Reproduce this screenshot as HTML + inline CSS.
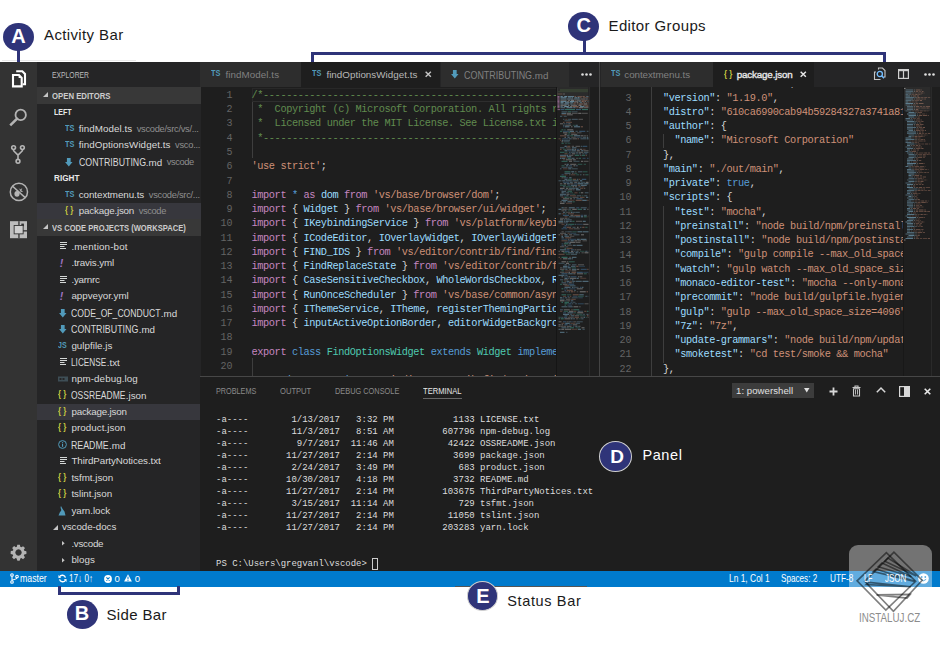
<!DOCTYPE html>
<html><head><meta charset="utf-8"><style>
html,body{font-family:'Liberation Sans',sans-serif;margin:0;padding:0;width:940px;height:645px;overflow:hidden;background:#fff;position:relative}
div{box-sizing:border-box}
.t{position:absolute;white-space:pre;}
svg{position:absolute;overflow:visible}
</style></head><body>
<div style="position:absolute;left:0px;top:62px;width:940px;height:509px;background:#1e1e1e;"></div><div style="position:absolute;left:0px;top:62px;width:37px;height:509px;background:#333333;"></div><div style="position:absolute;left:37px;top:62px;width:163.5px;height:509px;background:#252526;"></div><div style="position:absolute;left:200px;top:62px;width:740px;height:25px;background:#252526;"></div><div style="position:absolute;left:0px;top:571px;width:940px;height:15.5px;background:#007acc;"></div><div style="position:absolute;left:2px;top:60px;width:134px;height:1px;background:#e9e9e9;"></div><div style="position:absolute;left:17px;top:50px;width:3px;height:12px;background:#2f3479;"></div><div style="position:absolute;left:3.0px;top:22.7px;width:31.0px;height:28.6px;border-radius:50%;background:#2f3479;"></div><div style="position:absolute;left:-1.5px;top:21px;width:40px;height:30px;line-height:30px;text-align:center;font-family:'Liberation Sans',sans-serif;font-weight:bold;font-size:20px;color:#fff">A</div><div style="position:absolute;left:582.5px;top:40px;width:3px;height:13px;background:#2f3479;"></div><div style="position:absolute;left:311px;top:51.5px;width:575px;height:3px;background:#2f3479;"></div><div style="position:absolute;left:311px;top:51.5px;width:3px;height:10.5px;background:#2f3479;"></div><div style="position:absolute;left:883px;top:51.5px;width:3px;height:10.5px;background:#2f3479;"></div><div style="position:absolute;left:568.3px;top:11.5px;width:31.0px;height:29.0px;border-radius:50%;background:#2f3479;"></div><div style="position:absolute;left:563.8px;top:10px;width:40px;height:30px;line-height:30px;text-align:center;font-family:'Liberation Sans',sans-serif;font-weight:bold;font-size:20px;color:#fff">C</div><div style="position:absolute;left:58px;top:586px;width:3px;height:9.3px;background:#2f3479;"></div><div style="position:absolute;left:177.3px;top:586px;width:3px;height:9.3px;background:#2f3479;"></div><div style="position:absolute;left:58px;top:592.3px;width:122.3px;height:3px;background:#2f3479;"></div><div style="position:absolute;left:66.5px;top:600.0px;width:31.0px;height:28.6px;border-radius:50%;background:#2f3479;"></div><div style="position:absolute;left:62px;top:598.3px;width:40px;height:30px;line-height:30px;text-align:center;font-family:'Liberation Sans',sans-serif;font-weight:bold;font-size:20px;color:#fff">B</div><div style="position:absolute;left:455px;top:585.8px;width:132px;height:1px;background:#555555;"></div><div style="position:absolute;left:467.2px;top:581.3px;width:31.2px;height:29.4px;border-radius:50%;background:#2f3479;border:1.2px solid #d0d0d0;"></div><div style="position:absolute;left:462.8px;top:581px;width:40px;height:30px;line-height:30px;text-align:center;font-family:'Liberation Sans',sans-serif;font-weight:bold;font-size:20px;color:#fff">E</div><svg style="left:0;top:62px" width="37" height="509" viewBox="0 62 37 509">
<g fill="none" stroke="#ffffff" stroke-width="2.1" stroke-linejoin="miter">
 <path d="M13 75 h6 l2.7 2.8 v8.6 h-8.7 z"/>
 <path d="M16.2 71.2 v0 h6.1 l2.7 2.8 v10.2 h-2.3"/>
</g>
<path d="M18.6 74.2 v3.8 h3.6 z" fill="#ffffff"/>
<g fill="none" stroke="#b4b4b4" stroke-width="1.8">
 <circle cx="20.7" cy="114.9" r="5.2"/>
 <path d="M16.9 118.8 l-5.8 5.8" stroke-width="2.5" stroke-linecap="square"/>
</g>
<g fill="none" stroke="#b4b4b4" stroke-width="1.6">
 <circle cx="13.6" cy="147.6" r="1.9"/>
 <circle cx="22.4" cy="147.6" r="1.9"/>
 <circle cx="18" cy="161.3" r="1.9"/>
 <path d="M13.6 149.5 v1.2 l4.4 4.4 v4.3 M22.4 149.5 v1.2 l-4.4 4.4"/>
</g>
<g fill="none" stroke="#b4b4b4" stroke-width="1.5">
 <circle cx="18.9" cy="191.9" r="8.6"/>
 <path d="M12.6 186.2 l12.6 11.4"/>
</g>
<g fill="#b4b4b4">
 <ellipse cx="17" cy="193.8" rx="2.6" ry="2.9"/>
 <path d="M18.5 187.5 l1.5 2 l2.3-1.3 l-1 2.2 l2 1.2 l-2.5 .5 z"/>
</g>
<rect x="10" y="221.2" width="17" height="17" fill="#bdbdbd"/>
<g fill="#333333">
 <rect x="18.3" y="221.2" width="1.3" height="4.4"/>
 <rect x="18.3" y="233.8" width="1.3" height="4.4"/>
 <rect x="22.9" y="230.2" width="4.1" height="1.3"/>
 <rect x="21.3" y="223.6" width="2.6" height="2.6"/>
 <rect x="13.7" y="225" width="9.9" height="9.3"/>
</g>
<rect x="14.6" y="225.9" width="8.1" height="7.5" fill="#cfcfcf"/>
</svg><svg style="left:10px;top:543.5px" width="17" height="17" viewBox="0 0 16 16">
<path fill="#b4b4b4" d="M8 0.6l1.3 0.2 0.4 1.9 1 .45 1.6-1.1 1.8 1.8-1.1 1.6.45 1 1.9.4.2 1.3-.2 1.3-1.9.4-.45 1 1.1 1.6-1.8 1.8-1.6-1.1-1 .45-.4 1.9-1.3.2-1.3-.2-.4-1.9-1-.45-1.6 1.1-1.8-1.8 1.1-1.6-.45-1-1.9-.4L.6 8l.2-1.3 1.9-.4.45-1-1.1-1.6 1.8-1.8 1.6 1.1 1-.45.4-1.9z M8 5a3 3 0 1 0 0.001 0z" fill-rule="evenodd"/>
</svg><div style="position:absolute;left:37px;top:87px;width:163.5px;height:16.5px;background:#383838;"></div><div style="position:absolute;left:37px;top:219px;width:163.5px;height:16.5px;background:#383838;"></div><svg style="left:43.2px;top:92.3px" width="5" height="5" viewBox="0 0 10 10"><path d="M10 0 V10 H0 z" fill="#c5c5c5"/></svg><svg style="left:43.2px;top:224.3px" width="5" height="5" viewBox="0 0 10 10"><path d="M10 0 V10 H0 z" fill="#c5c5c5"/></svg><svg style="left:65.0px;top:157.5px" width="7.6" height="8.4" viewBox="0 0 8 9"><path d="M2 0 h4 v4.2 h2 l-4 4.8 l-4-4.8 h2z" fill="#519aba"/></svg><div style="position:absolute;left:37px;top:202.7px;width:163.5px;height:16.5px;background:#37373d;"></div><svg style="left:60px;top:242px" width="8" height="9" viewBox="0 0 8 9"><g fill="#d4d7d6"><rect x="0" y="0" width="7" height="1"/><rect x="0" y="2" width="7" height="1"/><rect x="0" y="4" width="4.5" height="1"/><rect x="0" y="6" width="6" height="1"/></g></svg><svg style="left:60px;top:276px" width="8" height="9" viewBox="0 0 8 9"><g fill="#d4d7d6"><rect x="0" y="0" width="7" height="1"/><rect x="0" y="2" width="7" height="1"/><rect x="0" y="4" width="4.5" height="1"/><rect x="0" y="6" width="6" height="1"/></g></svg><svg style="left:58.5px;top:308.5px" width="7.6" height="8.4" viewBox="0 0 8 9"><path d="M2 0 h4 v4.2 h2 l-4 4.8 l-4-4.8 h2z" fill="#519aba"/></svg><svg style="left:58.5px;top:325.0px" width="7.6" height="8.4" viewBox="0 0 8 9"><path d="M2 0 h4 v4.2 h2 l-4 4.8 l-4-4.8 h2z" fill="#519aba"/></svg><svg style="left:60px;top:358px" width="8" height="9" viewBox="0 0 8 9"><g fill="#d4d7d6"><rect x="0" y="0" width="7" height="1"/><rect x="0" y="2" width="7" height="1"/><rect x="0" y="4" width="4.5" height="1"/><rect x="0" y="6" width="6" height="1"/></g></svg><svg style="left:58.2px;top:375.7px" width="10" height="6" viewBox="0 0 10 6"><rect x="0" y="0.5" width="10" height="5" fill="#3e4e56"/><g fill="#252526"><rect x="1.5" y="2" width="2" height="2"/><rect x="4.5" y="2" width="2" height="2"/></g></svg><div style="position:absolute;left:37px;top:403.5px;width:163.5px;height:16.5px;background:#37373d;"></div><svg style="left:58.2px;top:440.2px" width="9" height="9" viewBox="0 0 9 9"><circle cx="4.5" cy="4.5" r="3.9" fill="none" stroke="#519aba" stroke-width="1"/><rect x="4" y="3.8" width="1.1" height="3" fill="#519aba"/><rect x="4" y="2.2" width="1.1" height="1" fill="#519aba"/></svg><svg style="left:60px;top:457px" width="8" height="9" viewBox="0 0 8 9"><g fill="#d4d7d6"><rect x="0" y="0" width="7" height="1"/><rect x="0" y="2" width="7" height="1"/><rect x="0" y="4" width="4.5" height="1"/><rect x="0" y="6" width="6" height="1"/></g></svg><svg style="left:58.2px;top:505.7px" width="8" height="10" viewBox="0 0 8 10"><path d="M3 0 C1.5 3 5 3.5 2 6 L0.5 9.5 H7.5 L6.5 5.5 C5 4 4 2 3 0z" fill="#519aba"/></svg><svg style="left:53.2px;top:524.9px" width="5" height="5" viewBox="0 0 10 10"><path d="M10 0 V10 H0 z" fill="#c5c5c5"/></svg><svg style="left:62px;top:541.45px" width="2.6999999999999997" height="4.5" viewBox="0 0 6 10"><path d="M0 0 L6 5 L0 10 z" fill="#c5c5c5"/></svg><svg style="left:62px;top:557.95px" width="2.6999999999999997" height="4.5" viewBox="0 0 6 10"><path d="M0 0 L6 5 L0 10 z" fill="#c5c5c5"/></svg><div style="position:absolute;left:37px;top:235.5px;width:163.5px;height:3px;background:#252526;"></div><div style="position:absolute;left:200px;top:62px;width:100.5px;height:25px;background:#2d2d2d;"></div><div style="position:absolute;left:301px;top:62px;width:139px;height:25px;background:#1e1e1e;"></div><svg style="left:425px;top:71.3px" width="6.5" height="6.5" viewBox="0 0 10 10"><path d="M1 1 L9 9 M9 1 L1 9" stroke="#c5c5c5" stroke-width="2.2"/></svg><div style="position:absolute;left:440.5px;top:62px;width:128.5px;height:25px;background:#2d2d2d;"></div><svg style="left:450.5px;top:70.3px" width="7.6" height="8.4" viewBox="0 0 8 9"><path d="M2 0 h4 v4.2 h2 l-4 4.8 l-4-4.8 h2z" fill="#519aba"/></svg><div style="position:absolute;left:600.5px;top:62px;width:112.0px;height:25px;background:#2d2d2d;"></div><div style="position:absolute;left:713px;top:62px;width:101px;height:25px;background:#1e1e1e;"></div><svg style="left:799.8px;top:71.3px" width="6.5" height="6.5" viewBox="0 0 10 10"><path d="M1 1 L9 9 M9 1 L1 9" stroke="#e8e8e8" stroke-width="2.2"/></svg><svg style="left:580.8px;top:72.5px" width="11" height="3" viewBox="0 0 11 3"><g fill="#e0e0e0"><circle cx="1.5" cy="1.5" r="1.3"/><circle cx="5.5" cy="1.5" r="1.3"/><circle cx="9.5" cy="1.5" r="1.3"/></g></svg><svg style="left:923.5px;top:72.5px" width="11" height="3" viewBox="0 0 11 3"><g fill="#e0e0e0"><circle cx="1.5" cy="1.5" r="1.3"/><circle cx="5.5" cy="1.5" r="1.3"/><circle cx="9.5" cy="1.5" r="1.3"/></g></svg><svg style="left:873px;top:67px" width="14" height="14" viewBox="0 0 14 14">
<path d="M5.5 2.5 V1 h4 l2.5 2.5 V10 h-1.5" fill="none" stroke="#c5c5c5" stroke-width="1.1"/>
<path d="M3 5 h-1.5 v7.5 h6" fill="none" stroke="#c5c5c5" stroke-width="1.1"/>
<circle cx="6.8" cy="7" r="2.6" fill="none" stroke="#75beff" stroke-width="1.3"/>
<path d="M8.6 8.8 L11 11.2" stroke="#75beff" stroke-width="1.5"/>
</svg><svg style="left:898px;top:69px" width="11" height="10" viewBox="0 0 11 10">
<rect x="0.6" y="0.6" width="9.8" height="8.8" fill="none" stroke="#d0d0d0" stroke-width="1.2"/>
<rect x="0.6" y="0.6" width="9.8" height="1.6" fill="#d0d0d0"/>
<rect x="4.9" y="0.6" width="1.2" height="8.8" fill="#d0d0d0"/>
</svg><div style="position:absolute;left:599px;top:62px;width:1px;height:314px;background:#444444;"></div><div style="position:absolute;left:251.5px;top:87.5px;width:306px;height:14px;background:transparent;border:1px solid #282828;border-bottom-color:#2e2e2e;"></div><div style="position:absolute;left:251.5px;top:101.5px;width:1px;height:56.9px;background:#3e3e3e;"></div><div style="position:absolute;left:251.5px;top:357.5px;width:1px;height:18.5px;background:#3e3e3e;"></div><div style="position:absolute;left:191.5px;top:87px;width:365.5px;height:289px;overflow:hidden"><div style="position:absolute;left:0;width:41.0px;top:0.9000000000000057px;height:16px;line-height:16px;text-align:right;font-family:'Liberation Mono',monospace;font-size:10px;color:#646464">1</div><div style="position:absolute;left:60px;top:-0.19999999999999396px;height:16px;line-height:16px;white-space:pre;font-family:'Liberation Mono',monospace;font-size:10.3px;letter-spacing:-0.4000px"><span style="color:#608b4e">/*-------------------------------------------------------------------------------------</span></div><div style="position:absolute;left:0;width:41.0px;top:15.170000000000002px;height:16px;line-height:16px;text-align:right;font-family:'Liberation Mono',monospace;font-size:10px;color:#646464">2</div><div style="position:absolute;left:60px;top:14.070000000000002px;height:16px;line-height:16px;white-space:pre;font-family:'Liberation Mono',monospace;font-size:10.3px;letter-spacing:-0.4000px"><span style="color:#608b4e"> *  Copyright (c) Microsoft Corporation. All rights reserved.</span></div><div style="position:absolute;left:0;width:41.0px;top:29.439999999999998px;height:16px;line-height:16px;text-align:right;font-family:'Liberation Mono',monospace;font-size:10px;color:#646464">3</div><div style="position:absolute;left:60px;top:28.339999999999996px;height:16px;line-height:16px;white-space:pre;font-family:'Liberation Mono',monospace;font-size:10.3px;letter-spacing:-0.4000px"><span style="color:#608b4e"> *  Licensed under the MIT License. See License.txt in the project root</span></div><div style="position:absolute;left:0;width:41.0px;top:43.71000000000001px;height:16px;line-height:16px;text-align:right;font-family:'Liberation Mono',monospace;font-size:10px;color:#646464">4</div><div style="position:absolute;left:60px;top:42.61000000000001px;height:16px;line-height:16px;white-space:pre;font-family:'Liberation Mono',monospace;font-size:10.3px;letter-spacing:-0.4000px"><span style="color:#608b4e"> *--------------------------------------------------------------------------------------</span></div><div style="position:absolute;left:0;width:41.0px;top:57.98000000000002px;height:16px;line-height:16px;text-align:right;font-family:'Liberation Mono',monospace;font-size:10px;color:#646464">5</div><div style="position:absolute;left:0;width:41.0px;top:72.25px;height:16px;line-height:16px;text-align:right;font-family:'Liberation Mono',monospace;font-size:10px;color:#646464">6</div><div style="position:absolute;left:60px;top:71.15px;height:16px;line-height:16px;white-space:pre;font-family:'Liberation Mono',monospace;font-size:10.3px;letter-spacing:-0.4000px"><span style="color:#ce9178">'use strict'</span><span style="color:#d4d4d4">;</span></div><div style="position:absolute;left:0;width:41.0px;top:86.52000000000001px;height:16px;line-height:16px;text-align:right;font-family:'Liberation Mono',monospace;font-size:10px;color:#646464">7</div><div style="position:absolute;left:0;width:41.0px;top:100.79000000000002px;height:16px;line-height:16px;text-align:right;font-family:'Liberation Mono',monospace;font-size:10px;color:#646464">8</div><div style="position:absolute;left:60px;top:99.69000000000003px;height:16px;line-height:16px;white-space:pre;font-family:'Liberation Mono',monospace;font-size:10.3px;letter-spacing:-0.4000px"><span style="color:#c586c0">import</span><span style="color:#d4d4d4"> </span><span style="color:#569cd6">*</span><span style="color:#d4d4d4"> </span><span style="color:#c586c0">as</span><span style="color:#d4d4d4"> </span><span style="color:#9cdcfe">dom</span><span style="color:#d4d4d4"> </span><span style="color:#c586c0">from</span><span style="color:#d4d4d4"> </span><span style="color:#ce9178">'vs/base/browser/dom'</span><span style="color:#d4d4d4">;</span></div><div style="position:absolute;left:0;width:41.0px;top:115.06px;height:16px;line-height:16px;text-align:right;font-family:'Liberation Mono',monospace;font-size:10px;color:#646464">9</div><div style="position:absolute;left:60px;top:113.96000000000001px;height:16px;line-height:16px;white-space:pre;font-family:'Liberation Mono',monospace;font-size:10.3px;letter-spacing:-0.4000px"><span style="color:#c586c0">import</span><span style="color:#d4d4d4"> { </span><span style="color:#9cdcfe">Widget</span><span style="color:#d4d4d4"> } </span><span style="color:#c586c0">from</span><span style="color:#d4d4d4"> </span><span style="color:#ce9178">'vs/base/browser/ui/widget'</span><span style="color:#d4d4d4">;</span></div><div style="position:absolute;left:0;width:41.0px;top:129.33px;height:16px;line-height:16px;text-align:right;font-family:'Liberation Mono',monospace;font-size:10px;color:#646464">10</div><div style="position:absolute;left:60px;top:128.23000000000002px;height:16px;line-height:16px;white-space:pre;font-family:'Liberation Mono',monospace;font-size:10.3px;letter-spacing:-0.4000px"><span style="color:#c586c0">import</span><span style="color:#d4d4d4"> { </span><span style="color:#9cdcfe">IKeybindingService</span><span style="color:#d4d4d4"> } </span><span style="color:#c586c0">from</span><span style="color:#d4d4d4"> </span><span style="color:#ce9178">'vs/platform/keybinding/common/keybinding'</span></div><div style="position:absolute;left:0;width:41.0px;top:143.6px;height:16px;line-height:16px;text-align:right;font-family:'Liberation Mono',monospace;font-size:10px;color:#646464">11</div><div style="position:absolute;left:60px;top:142.5px;height:16px;line-height:16px;white-space:pre;font-family:'Liberation Mono',monospace;font-size:10.3px;letter-spacing:-0.4000px"><span style="color:#c586c0">import</span><span style="color:#d4d4d4"> { </span><span style="color:#9cdcfe">ICodeEditor</span><span style="color:#d4d4d4">, </span><span style="color:#9cdcfe">IOverlayWidget</span><span style="color:#d4d4d4">, </span><span style="color:#9cdcfe">IOverlayWidgetPosition</span></div><div style="position:absolute;left:0;width:41.0px;top:157.87px;height:16px;line-height:16px;text-align:right;font-family:'Liberation Mono',monospace;font-size:10px;color:#646464">12</div><div style="position:absolute;left:60px;top:156.77px;height:16px;line-height:16px;white-space:pre;font-family:'Liberation Mono',monospace;font-size:10.3px;letter-spacing:-0.4000px"><span style="color:#c586c0">import</span><span style="color:#d4d4d4"> { </span><span style="color:#9cdcfe">FIND_IDS</span><span style="color:#d4d4d4"> } </span><span style="color:#c586c0">from</span><span style="color:#d4d4d4"> </span><span style="color:#ce9178">'vs/editor/contrib/find/findModel'</span></div><div style="position:absolute;left:0;width:41.0px;top:172.14px;height:16px;line-height:16px;text-align:right;font-family:'Liberation Mono',monospace;font-size:10px;color:#646464">13</div><div style="position:absolute;left:60px;top:171.04px;height:16px;line-height:16px;white-space:pre;font-family:'Liberation Mono',monospace;font-size:10.3px;letter-spacing:-0.4000px"><span style="color:#c586c0">import</span><span style="color:#d4d4d4"> { </span><span style="color:#9cdcfe">FindReplaceState</span><span style="color:#d4d4d4"> } </span><span style="color:#c586c0">from</span><span style="color:#d4d4d4"> </span><span style="color:#ce9178">'vs/editor/contrib/find/findState'</span></div><div style="position:absolute;left:0;width:41.0px;top:186.40999999999997px;height:16px;line-height:16px;text-align:right;font-family:'Liberation Mono',monospace;font-size:10px;color:#646464">14</div><div style="position:absolute;left:60px;top:185.30999999999997px;height:16px;line-height:16px;white-space:pre;font-family:'Liberation Mono',monospace;font-size:10.3px;letter-spacing:-0.4000px"><span style="color:#c586c0">import</span><span style="color:#d4d4d4"> { </span><span style="color:#9cdcfe">CaseSensitiveCheckbox</span><span style="color:#d4d4d4">, </span><span style="color:#9cdcfe">WholeWordsCheckbox</span><span style="color:#d4d4d4">, </span><span style="color:#9cdcfe">RegexCheckbox</span></div><div style="position:absolute;left:0;width:41.0px;top:200.68px;height:16px;line-height:16px;text-align:right;font-family:'Liberation Mono',monospace;font-size:10px;color:#646464">15</div><div style="position:absolute;left:60px;top:199.58px;height:16px;line-height:16px;white-space:pre;font-family:'Liberation Mono',monospace;font-size:10.3px;letter-spacing:-0.4000px"><span style="color:#c586c0">import</span><span style="color:#d4d4d4"> { </span><span style="color:#9cdcfe">RunOnceScheduler</span><span style="color:#d4d4d4"> } </span><span style="color:#c586c0">from</span><span style="color:#d4d4d4"> </span><span style="color:#ce9178">'vs/base/common/async'</span></div><div style="position:absolute;left:0;width:41.0px;top:214.95px;height:16px;line-height:16px;text-align:right;font-family:'Liberation Mono',monospace;font-size:10px;color:#646464">16</div><div style="position:absolute;left:60px;top:213.85px;height:16px;line-height:16px;white-space:pre;font-family:'Liberation Mono',monospace;font-size:10.3px;letter-spacing:-0.4000px"><span style="color:#c586c0">import</span><span style="color:#d4d4d4"> { </span><span style="color:#9cdcfe">IThemeService</span><span style="color:#d4d4d4">, </span><span style="color:#9cdcfe">ITheme</span><span style="color:#d4d4d4">, </span><span style="color:#9cdcfe">registerThemingParticipant</span></div><div style="position:absolute;left:0;width:41.0px;top:229.22000000000003px;height:16px;line-height:16px;text-align:right;font-family:'Liberation Mono',monospace;font-size:10px;color:#646464">17</div><div style="position:absolute;left:60px;top:228.12000000000003px;height:16px;line-height:16px;white-space:pre;font-family:'Liberation Mono',monospace;font-size:10.3px;letter-spacing:-0.4000px"><span style="color:#c586c0">import</span><span style="color:#d4d4d4"> { </span><span style="color:#9cdcfe">inputActiveOptionBorder</span><span style="color:#d4d4d4">, </span><span style="color:#9cdcfe">editorWidgetBackground</span><span style="color:#d4d4d4">, </span><span style="color:#9cdcfe">contrastBorder</span></div><div style="position:absolute;left:0;width:41.0px;top:243.49px;height:16px;line-height:16px;text-align:right;font-family:'Liberation Mono',monospace;font-size:10px;color:#646464">18</div><div style="position:absolute;left:0;width:41.0px;top:257.76px;height:16px;line-height:16px;text-align:right;font-family:'Liberation Mono',monospace;font-size:10px;color:#646464">19</div><div style="position:absolute;left:60px;top:256.65999999999997px;height:16px;line-height:16px;white-space:pre;font-family:'Liberation Mono',monospace;font-size:10.3px;letter-spacing:-0.4000px"><span style="color:#c586c0">export</span><span style="color:#d4d4d4"> </span><span style="color:#569cd6">class</span><span style="color:#d4d4d4"> </span><span style="color:#4ec9b0">FindOptionsWidget</span><span style="color:#d4d4d4"> </span><span style="color:#569cd6">extends</span><span style="color:#d4d4d4"> </span><span style="color:#4ec9b0">Widget</span><span style="color:#d4d4d4"> </span><span style="color:#569cd6">implements</span><span style="color:#d4d4d4"> </span><span style="color:#4ec9b0">IOverlayWidget</span></div><div style="position:absolute;left:0;width:41.0px;top:272.03px;height:16px;line-height:16px;text-align:right;font-family:'Liberation Mono',monospace;font-size:10px;color:#646464">20</div><div style="position:absolute;left:0;width:41.0px;top:286.29999999999995px;height:16px;line-height:16px;text-align:right;font-family:'Liberation Mono',monospace;font-size:10px;color:#646464">21</div><div style="position:absolute;left:60px;top:285.19999999999993px;height:16px;line-height:16px;white-space:pre;font-family:'Liberation Mono',monospace;font-size:10.3px;letter-spacing:-0.4000px"><span style="color:#d4d4d4">    </span><span style="color:#569cd6">private</span><span style="color:#d4d4d4"> </span><span style="color:#569cd6">static</span><span style="color:#d4d4d4"> </span><span style="color:#9cdcfe">ID</span><span style="color:#d4d4d4"> = </span><span style="color:#ce9178">'editor.contrib.findOptionsWidget'</span><span style="color:#d4d4d4">;</span></div></div><div style="position:absolute;left:651px;top:87px;width:1px;height:289px;background:#3e3e3e;"></div><div style="position:absolute;left:662.6px;top:134.2px;width:1px;height:14.2px;background:#3e3e3e;"></div><div style="position:absolute;left:662.6px;top:205.5px;width:1px;height:157px;background:#3e3e3e;"></div><div style="position:absolute;left:591.4px;top:87px;width:312.4px;height:289px;overflow:hidden"><div style="position:absolute;left:0;width:40.10000000000002px;top:-10.670000000000002px;height:16px;line-height:16px;text-align:right;font-family:'Liberation Mono',monospace;font-size:10px;color:#646464">2</div><div style="position:absolute;left:60px;top:-11.770000000000001px;height:16px;line-height:16px;white-space:pre;font-family:'Liberation Mono',monospace;font-size:10.3px;letter-spacing:-0.4000px"><span style="color:#d4d4d4">  </span><span style="color:#9cdcfe">"name"</span><span style="color:#d4d4d4">: </span><span style="color:#ce9178">"code-oss-dev"</span><span style="color:#d4d4d4">,</span></div><div style="position:absolute;left:0;width:40.10000000000002px;top:3.5999999999999943px;height:16px;line-height:16px;text-align:right;font-family:'Liberation Mono',monospace;font-size:10px;color:#646464">3</div><div style="position:absolute;left:60px;top:2.4999999999999947px;height:16px;line-height:16px;white-space:pre;font-family:'Liberation Mono',monospace;font-size:10.3px;letter-spacing:-0.4000px"><span style="color:#d4d4d4">  </span><span style="color:#9cdcfe">"version"</span><span style="color:#d4d4d4">: </span><span style="color:#ce9178">"1.19.0"</span><span style="color:#d4d4d4">,</span></div><div style="position:absolute;left:0;width:40.10000000000002px;top:17.870000000000005px;height:16px;line-height:16px;text-align:right;font-family:'Liberation Mono',monospace;font-size:10px;color:#646464">4</div><div style="position:absolute;left:60px;top:16.770000000000003px;height:16px;line-height:16px;white-space:pre;font-family:'Liberation Mono',monospace;font-size:10.3px;letter-spacing:-0.4000px"><span style="color:#d4d4d4">  </span><span style="color:#9cdcfe">"distro"</span><span style="color:#d4d4d4">: </span><span style="color:#ce9178">"610ca6990cab94b59284327a3741a81e4c4f2c3e"</span><span style="color:#d4d4d4">,</span></div><div style="position:absolute;left:0;width:40.10000000000002px;top:32.14px;height:16px;line-height:16px;text-align:right;font-family:'Liberation Mono',monospace;font-size:10px;color:#646464">5</div><div style="position:absolute;left:60px;top:31.04px;height:16px;line-height:16px;white-space:pre;font-family:'Liberation Mono',monospace;font-size:10.3px;letter-spacing:-0.4000px"><span style="color:#d4d4d4">  </span><span style="color:#9cdcfe">"author"</span><span style="color:#d4d4d4">: {</span></div><div style="position:absolute;left:0;width:40.10000000000002px;top:46.41px;height:16px;line-height:16px;text-align:right;font-family:'Liberation Mono',monospace;font-size:10px;color:#646464">6</div><div style="position:absolute;left:60px;top:45.309999999999995px;height:16px;line-height:16px;white-space:pre;font-family:'Liberation Mono',monospace;font-size:10.3px;letter-spacing:-0.4000px"><span style="color:#d4d4d4">    </span><span style="color:#9cdcfe">"name"</span><span style="color:#d4d4d4">: </span><span style="color:#ce9178">"Microsoft Corporation"</span></div><div style="position:absolute;left:0;width:40.10000000000002px;top:60.68000000000001px;height:16px;line-height:16px;text-align:right;font-family:'Liberation Mono',monospace;font-size:10px;color:#646464">7</div><div style="position:absolute;left:60px;top:59.580000000000005px;height:16px;line-height:16px;white-space:pre;font-family:'Liberation Mono',monospace;font-size:10.3px;letter-spacing:-0.4000px"><span style="color:#d4d4d4">  },</span></div><div style="position:absolute;left:0;width:40.10000000000002px;top:74.94999999999999px;height:16px;line-height:16px;text-align:right;font-family:'Liberation Mono',monospace;font-size:10px;color:#646464">8</div><div style="position:absolute;left:60px;top:73.85px;height:16px;line-height:16px;white-space:pre;font-family:'Liberation Mono',monospace;font-size:10.3px;letter-spacing:-0.4000px"><span style="color:#d4d4d4">  </span><span style="color:#9cdcfe">"main"</span><span style="color:#d4d4d4">: </span><span style="color:#ce9178">"./out/main"</span><span style="color:#d4d4d4">,</span></div><div style="position:absolute;left:0;width:40.10000000000002px;top:89.22px;height:16px;line-height:16px;text-align:right;font-family:'Liberation Mono',monospace;font-size:10px;color:#646464">9</div><div style="position:absolute;left:60px;top:88.12px;height:16px;line-height:16px;white-space:pre;font-family:'Liberation Mono',monospace;font-size:10.3px;letter-spacing:-0.4000px"><span style="color:#d4d4d4">  </span><span style="color:#9cdcfe">"private"</span><span style="color:#d4d4d4">: </span><span style="color:#569cd6">true</span><span style="color:#d4d4d4">,</span></div><div style="position:absolute;left:0;width:40.10000000000002px;top:103.49000000000001px;height:16px;line-height:16px;text-align:right;font-family:'Liberation Mono',monospace;font-size:10px;color:#646464">10</div><div style="position:absolute;left:60px;top:102.39000000000001px;height:16px;line-height:16px;white-space:pre;font-family:'Liberation Mono',monospace;font-size:10.3px;letter-spacing:-0.4000px"><span style="color:#d4d4d4">  </span><span style="color:#9cdcfe">"scripts"</span><span style="color:#d4d4d4">: {</span></div><div style="position:absolute;left:0;width:40.10000000000002px;top:117.75999999999999px;height:16px;line-height:16px;text-align:right;font-family:'Liberation Mono',monospace;font-size:10px;color:#646464">11</div><div style="position:absolute;left:60px;top:116.66px;height:16px;line-height:16px;white-space:pre;font-family:'Liberation Mono',monospace;font-size:10.3px;letter-spacing:-0.4000px"><span style="color:#d4d4d4">    </span><span style="color:#9cdcfe">"test"</span><span style="color:#d4d4d4">: </span><span style="color:#ce9178">"mocha"</span><span style="color:#d4d4d4">,</span></div><div style="position:absolute;left:0;width:40.10000000000002px;top:132.02999999999997px;height:16px;line-height:16px;text-align:right;font-family:'Liberation Mono',monospace;font-size:10px;color:#646464">12</div><div style="position:absolute;left:60px;top:130.92999999999998px;height:16px;line-height:16px;white-space:pre;font-family:'Liberation Mono',monospace;font-size:10.3px;letter-spacing:-0.4000px"><span style="color:#d4d4d4">    </span><span style="color:#9cdcfe">"preinstall"</span><span style="color:#d4d4d4">: </span><span style="color:#ce9178">"node build/npm/preinstall.js"</span><span style="color:#d4d4d4">,</span></div><div style="position:absolute;left:0;width:40.10000000000002px;top:146.3px;height:16px;line-height:16px;text-align:right;font-family:'Liberation Mono',monospace;font-size:10px;color:#646464">13</div><div style="position:absolute;left:60px;top:145.20000000000002px;height:16px;line-height:16px;white-space:pre;font-family:'Liberation Mono',monospace;font-size:10.3px;letter-spacing:-0.4000px"><span style="color:#d4d4d4">    </span><span style="color:#9cdcfe">"postinstall"</span><span style="color:#d4d4d4">: </span><span style="color:#ce9178">"node build/npm/postinstall.js"</span><span style="color:#d4d4d4">,</span></div><div style="position:absolute;left:0;width:40.10000000000002px;top:160.57px;height:16px;line-height:16px;text-align:right;font-family:'Liberation Mono',monospace;font-size:10px;color:#646464">14</div><div style="position:absolute;left:60px;top:159.47px;height:16px;line-height:16px;white-space:pre;font-family:'Liberation Mono',monospace;font-size:10.3px;letter-spacing:-0.4000px"><span style="color:#d4d4d4">    </span><span style="color:#9cdcfe">"compile"</span><span style="color:#d4d4d4">: </span><span style="color:#ce9178">"gulp compile --max_old_space_size=4096"</span><span style="color:#d4d4d4">,</span></div><div style="position:absolute;left:0;width:40.10000000000002px;top:174.83999999999997px;height:16px;line-height:16px;text-align:right;font-family:'Liberation Mono',monospace;font-size:10px;color:#646464">15</div><div style="position:absolute;left:60px;top:173.73999999999998px;height:16px;line-height:16px;white-space:pre;font-family:'Liberation Mono',monospace;font-size:10.3px;letter-spacing:-0.4000px"><span style="color:#d4d4d4">    </span><span style="color:#9cdcfe">"watch"</span><span style="color:#d4d4d4">: </span><span style="color:#ce9178">"gulp watch --max_old_space_size=4096"</span><span style="color:#d4d4d4">,</span></div><div style="position:absolute;left:0;width:40.10000000000002px;top:189.11px;height:16px;line-height:16px;text-align:right;font-family:'Liberation Mono',monospace;font-size:10px;color:#646464">16</div><div style="position:absolute;left:60px;top:188.01000000000002px;height:16px;line-height:16px;white-space:pre;font-family:'Liberation Mono',monospace;font-size:10.3px;letter-spacing:-0.4000px"><span style="color:#d4d4d4">    </span><span style="color:#9cdcfe">"monaco-editor-test"</span><span style="color:#d4d4d4">: </span><span style="color:#ce9178">"mocha --only-monaco-editor"</span><span style="color:#d4d4d4">,</span></div><div style="position:absolute;left:0;width:40.10000000000002px;top:203.38px;height:16px;line-height:16px;text-align:right;font-family:'Liberation Mono',monospace;font-size:10px;color:#646464">17</div><div style="position:absolute;left:60px;top:202.28px;height:16px;line-height:16px;white-space:pre;font-family:'Liberation Mono',monospace;font-size:10.3px;letter-spacing:-0.4000px"><span style="color:#d4d4d4">    </span><span style="color:#9cdcfe">"precommit"</span><span style="color:#d4d4d4">: </span><span style="color:#ce9178">"node build/gulpfile.hygiene.js"</span><span style="color:#d4d4d4">,</span></div><div style="position:absolute;left:0;width:40.10000000000002px;top:217.64999999999998px;height:16px;line-height:16px;text-align:right;font-family:'Liberation Mono',monospace;font-size:10px;color:#646464">18</div><div style="position:absolute;left:60px;top:216.54999999999998px;height:16px;line-height:16px;white-space:pre;font-family:'Liberation Mono',monospace;font-size:10.3px;letter-spacing:-0.4000px"><span style="color:#d4d4d4">    </span><span style="color:#9cdcfe">"gulp"</span><span style="color:#d4d4d4">: </span><span style="color:#ce9178">"gulp --max_old_space_size=4096"</span><span style="color:#d4d4d4">,</span></div><div style="position:absolute;left:0;width:40.10000000000002px;top:231.92000000000002px;height:16px;line-height:16px;text-align:right;font-family:'Liberation Mono',monospace;font-size:10px;color:#646464">19</div><div style="position:absolute;left:60px;top:230.82000000000002px;height:16px;line-height:16px;white-space:pre;font-family:'Liberation Mono',monospace;font-size:10.3px;letter-spacing:-0.4000px"><span style="color:#d4d4d4">    </span><span style="color:#9cdcfe">"7z"</span><span style="color:#d4d4d4">: </span><span style="color:#ce9178">"7z"</span><span style="color:#d4d4d4">,</span></div><div style="position:absolute;left:0;width:40.10000000000002px;top:246.19px;height:16px;line-height:16px;text-align:right;font-family:'Liberation Mono',monospace;font-size:10px;color:#646464">20</div><div style="position:absolute;left:60px;top:245.09px;height:16px;line-height:16px;white-space:pre;font-family:'Liberation Mono',monospace;font-size:10.3px;letter-spacing:-0.4000px"><span style="color:#d4d4d4">    </span><span style="color:#9cdcfe">"update-grammars"</span><span style="color:#d4d4d4">: </span><span style="color:#ce9178">"node build/npm/update-all-grammars.js"</span><span style="color:#d4d4d4">,</span></div><div style="position:absolute;left:0;width:40.10000000000002px;top:260.46px;height:16px;line-height:16px;text-align:right;font-family:'Liberation Mono',monospace;font-size:10px;color:#646464">21</div><div style="position:absolute;left:60px;top:259.35999999999996px;height:16px;line-height:16px;white-space:pre;font-family:'Liberation Mono',monospace;font-size:10.3px;letter-spacing:-0.4000px"><span style="color:#d4d4d4">    </span><span style="color:#9cdcfe">"smoketest"</span><span style="color:#d4d4d4">: </span><span style="color:#ce9178">"cd test/smoke &amp;&amp; mocha"</span></div><div style="position:absolute;left:0;width:40.10000000000002px;top:274.72999999999996px;height:16px;line-height:16px;text-align:right;font-family:'Liberation Mono',monospace;font-size:10px;color:#646464">22</div><div style="position:absolute;left:60px;top:273.62999999999994px;height:16px;line-height:16px;white-space:pre;font-family:'Liberation Mono',monospace;font-size:10.3px;letter-spacing:-0.4000px"><span style="color:#d4d4d4">  },</span></div></div><div style="position:absolute;left:200px;top:376px;width:740px;height:195px;background:#1e1e1e;"></div><div style="position:absolute;left:200px;top:376px;width:740px;height:1px;background:#474747;"></div><div style="position:absolute;left:423px;top:398px;width:38.5px;height:1px;background:#666666;"></div><div style="position:absolute;left:731.7px;top:383px;width:82.3px;height:15.2px;background:#3c3c3c;"></div><svg style="left:804px;top:387.5px" width="5.5" height="4.5" viewBox="0 0 10 8"><path d="M0 0 H10 L5 8z" fill="#e0e0e0"/></svg><svg style="left:828.5px;top:386.5px" width="9" height="9" viewBox="0 0 9 9"><path d="M4.5 0.5 V8.5 M0.5 4.5 H8.5" stroke="#d8d8d8" stroke-width="1.8"/></svg><svg style="left:851.5px;top:385px" width="9" height="12" viewBox="0 0 9 12"><g fill="none" stroke="#c8c8c8" stroke-width="1.1">
<path d="M1.5 3.5 V11 H7.5 V3.5"/><path d="M0.5 2.5 H8.5"/><path d="M3 2.5 V1 H6 V2.5"/></g>
<g fill="#c8c8c8"><rect x="3" y="4.5" width="0.9" height="5"/><rect x="5.1" y="4.5" width="0.9" height="5"/><rect x="1.5" y="3.2" width="6" height="1"/></g></svg><svg style="left:875.5px;top:387px" width="10" height="6" viewBox="0 0 10 6"><path d="M0.8 5.2 L5 1 L9.2 5.2" fill="none" stroke="#d8d8d8" stroke-width="1.5"/></svg><svg style="left:898.5px;top:385.5px" width="11" height="11" viewBox="0 0 11 11"><rect x="0.6" y="0.6" width="9.8" height="9.8" fill="none" stroke="#d8d8d8" stroke-width="1.2"/><rect x="5" y="0.6" width="5.4" height="9.8" fill="#d8d8d8"/></svg><svg style="left:923.7px;top:387.6px" width="7" height="7" viewBox="0 0 10 10"><path d="M1 1 L9 9 M9 1 L1 9" stroke="#e8e8e8" stroke-width="2.3"/></svg><div style="position:absolute;left:216px;top:413.4px;height:14px;line-height:14px;white-space:pre;font-family:'Liberation Mono',monospace;font-size:9px;color:#dddddd;letter-spacing:-0.0120px">-a----        1/13/2017   3:32 PM           1133 LICENSE.txt</div><div style="position:absolute;left:216px;top:425.4px;height:14px;line-height:14px;white-space:pre;font-family:'Liberation Mono',monospace;font-size:9px;color:#dddddd;letter-spacing:-0.0120px">-a----        11/3/2017   8:51 AM         607796 npm-debug.log</div><div style="position:absolute;left:216px;top:437.4px;height:14px;line-height:14px;white-space:pre;font-family:'Liberation Mono',monospace;font-size:9px;color:#dddddd;letter-spacing:-0.0120px">-a----         9/7/2017  11:46 AM          42422 OSSREADME.json</div><div style="position:absolute;left:216px;top:449.4px;height:14px;line-height:14px;white-space:pre;font-family:'Liberation Mono',monospace;font-size:9px;color:#dddddd;letter-spacing:-0.0120px">-a----       11/27/2017   2:14 PM           3699 package.json</div><div style="position:absolute;left:216px;top:461.4px;height:14px;line-height:14px;white-space:pre;font-family:'Liberation Mono',monospace;font-size:9px;color:#dddddd;letter-spacing:-0.0120px">-a----        2/24/2017   3:49 PM            683 product.json</div><div style="position:absolute;left:216px;top:473.4px;height:14px;line-height:14px;white-space:pre;font-family:'Liberation Mono',monospace;font-size:9px;color:#dddddd;letter-spacing:-0.0120px">-a----       10/30/2017   4:18 PM           3732 README.md</div><div style="position:absolute;left:216px;top:485.4px;height:14px;line-height:14px;white-space:pre;font-family:'Liberation Mono',monospace;font-size:9px;color:#dddddd;letter-spacing:-0.0120px">-a----       11/27/2017   2:14 PM         103675 ThirdPartyNotices.txt</div><div style="position:absolute;left:216px;top:497.4px;height:14px;line-height:14px;white-space:pre;font-family:'Liberation Mono',monospace;font-size:9px;color:#dddddd;letter-spacing:-0.0120px">-a----        3/15/2017  11:14 AM            729 tsfmt.json</div><div style="position:absolute;left:216px;top:509.4px;height:14px;line-height:14px;white-space:pre;font-family:'Liberation Mono',monospace;font-size:9px;color:#dddddd;letter-spacing:-0.0120px">-a----       11/27/2017   2:14 PM          11050 tslint.json</div><div style="position:absolute;left:216px;top:521.4px;height:14px;line-height:14px;white-space:pre;font-family:'Liberation Mono',monospace;font-size:9px;color:#dddddd;letter-spacing:-0.0120px">-a----       11/27/2017   2:14 PM         203283 yarn.lock</div><div style="position:absolute;left:216px;top:557.4px;height:14px;line-height:14px;white-space:pre;font-family:'Liberation Mono',monospace;font-size:9px;color:#dddddd;letter-spacing:-0.0120px">PS C:\Users\gregvanl\vscode&gt; </div><div style="position:absolute;left:372px;top:558.2px;width:6.4px;height:11.5px;background:transparent;border:1px solid #cccccc;"></div><svg style="left:9.5px;top:573px" width="9" height="11" viewBox="0 0 9 11"><g fill="none" stroke="#fff" stroke-width="1.1">
<circle cx="2" cy="2" r="1.3"/><circle cx="7" cy="3.5" r="1.3"/><circle cx="2" cy="9" r="1.3"/><path d="M2 3.3 V7.7 M7 4.8 C7 7 2 6 2 7.7"/></g></svg><svg style="left:57.5px;top:574px" width="9" height="9" viewBox="0 0 10 10"><g fill="none" stroke="#fff" stroke-width="1.5">
<path d="M8.3 4 A3.6 3.6 0 0 0 1.8 3"/><path d="M1.7 6 A3.6 3.6 0 0 0 8.2 7"/></g>
<path d="M0.5 1 L3.5 4.2 L0.5 4.5z M9.5 9 L6.5 5.8 L9.5 5.5z" fill="#fff"/></svg><svg style="left:103.8px;top:574.5px" width="8" height="8" viewBox="0 0 8 8"><circle cx="4" cy="4" r="3.9" fill="#fff"/><path d="M2.4 2.4 L5.6 5.6 M5.6 2.4 L2.4 5.6" stroke="#007acc" stroke-width="1.1"/></svg><svg style="left:123.8px;top:574px" width="8" height="8" viewBox="0 0 8 8"><path d="M4 0.2 L7.9 7.6 H0.1z" fill="#fff"/><rect x="3.5" y="2.6" width="1" height="2.8" fill="#007acc"/><rect x="3.5" y="6" width="1" height="0.9" fill="#007acc"/></svg><svg style="left:917.8px;top:573px" width="11" height="11" viewBox="0 0 11 11"><circle cx="5.5" cy="5.5" r="5.3" fill="#fff"/><circle cx="3.7" cy="4" r="0.9" fill="#007acc"/><circle cx="7.3" cy="4" r="0.9" fill="#007acc"/><path d="M2.8 6.3 Q5.5 9.3 8.2 6.3" fill="none" stroke="#007acc" stroke-width="1"/></svg><div style="position:absolute;left:598.6px;top:440.79999999999995px;width:33.2px;height:31.2px;border-radius:50%;background:#2f3479;border:1.2px solid #d0d0d0;"></div><div style="position:absolute;left:597.0px;top:441.79999999999995px;width:40px;height:30px;line-height:30px;text-align:center;font-family:'Liberation Sans',sans-serif;font-weight:bold;font-size:19px;color:#fff">D</div><div style="position:absolute;left:849px;top:544.7px;width:83px;height:80px;border-radius:9px;background:rgba(255,255,255,0.38)"></div><svg style="left:850px;top:545px" width="80" height="70" viewBox="0 0 737 645"><g fill="none" stroke="rgba(0,0,0,0.5)" stroke-width="15" stroke-linejoin="miter">
<path d="M65 330 L335 70 L605 335 L330 600 Z"/>
<path d="M135 335 L405 65 L665 325 L400 610 Z"/>
<path d="M260 200 L295 165 L565 292 Z"/>
<path d="M320 150 L350 120 L610 285 Z"/>
<path d="M215 245 L240 222 L595 335 Z"/>
<path d="M150 365 L175 345 L560 385 Z"/>
<path d="M245 460 L555 455 L525 490 Z"/>
</g></svg><svg style="left:557px;top:87px" width="31.5" height="289" viewBox="0 0 31.5 289"><rect x="0" y="0" width="31.5" height="21.5" fill="#ffffff" opacity="0.06"/><rect x="3.00" y="2.5" width="28.00" height="1" fill="#608b4e" opacity="0.4"/><rect x="1.00" y="4.2" width="30.00" height="1" fill="#608b4e" opacity="0.25"/><rect x="0.50" y="6.5" width="5.00" height="1" fill="#ce9178" opacity="0.35"/><rect x="6.00" y="6.5" width="2.00" height="1" fill="#d4d4d4" opacity="0.3"/><rect x="0.50" y="9.0" width="2.00" height="1" fill="#c586c0" opacity="0.6"/><rect x="3.50" y="9.0" width="2.25" height="1" fill="#9cdcfe" opacity="0.47"/><rect x="7.25" y="9.0" width="3.00" height="1" fill="#9cdcfe" opacity="0.51"/><rect x="11.00" y="9.0" width="6.00" height="1" fill="#9cdcfe" opacity="0.43"/><rect x="17.50" y="9.0" width="1.50" height="1" fill="#ce9178" opacity="0.39"/><rect x="20.50" y="9.0" width="4.50" height="1" fill="#ce9178" opacity="0.34"/><rect x="25.50" y="9.0" width="2.25" height="1" fill="#ce9178" opacity="0.41"/><rect x="29.25" y="9.0" width="2.25" height="1" fill="#9cdcfe" opacity="0.31"/><rect x="0.50" y="10.2" width="2.00" height="1" fill="#c586c0" opacity="0.6"/><rect x="3.50" y="10.2" width="6.00" height="1" fill="#9cdcfe" opacity="0.47"/><rect x="11.00" y="10.2" width="3.00" height="1" fill="#9cdcfe" opacity="0.34"/><rect x="14.50" y="10.2" width="1.50" height="1" fill="#9cdcfe" opacity="0.41"/><rect x="17.50" y="10.2" width="3.00" height="1" fill="#9cdcfe" opacity="0.42"/><rect x="21.00" y="10.2" width="1.50" height="1" fill="#9cdcfe" opacity="0.52"/><rect x="23.00" y="10.2" width="1.50" height="1" fill="#ce9178" opacity="0.35"/><rect x="26.00" y="10.2" width="5.50" height="1" fill="#ce9178" opacity="0.33"/><rect x="0.50" y="11.5" width="2.00" height="1" fill="#c586c0" opacity="0.6"/><rect x="3.50" y="11.5" width="6.00" height="1" fill="#9cdcfe" opacity="0.35"/><rect x="10.00" y="11.5" width="6.00" height="1" fill="#9cdcfe" opacity="0.37"/><rect x="16.75" y="11.5" width="6.00" height="1" fill="#9cdcfe" opacity="0.38"/><rect x="23.50" y="11.5" width="4.50" height="1" fill="#d4d4d4" opacity="0.31"/><rect x="28.50" y="11.5" width="2.25" height="1" fill="#9cdcfe" opacity="0.3"/><rect x="31.25" y="11.5" width="0.25" height="1" fill="#ce9178" opacity="0.44"/><rect x="0.50" y="12.8" width="2.00" height="1" fill="#c586c0" opacity="0.6"/><rect x="3.50" y="12.8" width="6.00" height="1" fill="#d4d4d4" opacity="0.33"/><rect x="11.00" y="12.8" width="2.25" height="1" fill="#d4d4d4" opacity="0.39"/><rect x="14.00" y="12.8" width="3.00" height="1" fill="#d4d4d4" opacity="0.53"/><rect x="17.50" y="12.8" width="1.50" height="1" fill="#ce9178" opacity="0.32"/><rect x="19.50" y="12.8" width="4.50" height="1" fill="#d4d4d4" opacity="0.34"/><rect x="24.50" y="12.8" width="6.00" height="1" fill="#ce9178" opacity="0.4"/><rect x="31.00" y="12.8" width="0.50" height="1" fill="#ce9178" opacity="0.52"/><rect x="0.50" y="14.0" width="2.00" height="1" fill="#c586c0" opacity="0.6"/><rect x="3.50" y="14.0" width="6.00" height="1" fill="#9cdcfe" opacity="0.47"/><rect x="10.00" y="14.0" width="2.25" height="1" fill="#d4d4d4" opacity="0.32"/><rect x="13.00" y="14.0" width="4.50" height="1" fill="#9cdcfe" opacity="0.51"/><rect x="18.00" y="14.0" width="3.00" height="1" fill="#d4d4d4" opacity="0.31"/><rect x="21.50" y="14.0" width="2.25" height="1" fill="#9cdcfe" opacity="0.32"/><rect x="24.50" y="14.0" width="2.25" height="1" fill="#ce9178" opacity="0.49"/><rect x="27.50" y="14.0" width="1.50" height="1" fill="#d4d4d4" opacity="0.33"/><rect x="30.50" y="14.0" width="1.00" height="1" fill="#9cdcfe" opacity="0.31"/><rect x="0.50" y="15.2" width="2.00" height="1" fill="#c586c0" opacity="0.6"/><rect x="3.50" y="15.2" width="3.00" height="1" fill="#9cdcfe" opacity="0.52"/><rect x="8.00" y="15.2" width="4.50" height="1" fill="#9cdcfe" opacity="0.45"/><rect x="13.25" y="15.2" width="3.00" height="1" fill="#9cdcfe" opacity="0.43"/><rect x="17.00" y="15.2" width="2.25" height="1" fill="#ce9178" opacity="0.4"/><rect x="19.75" y="15.2" width="1.50" height="1" fill="#d4d4d4" opacity="0.45"/><rect x="22.75" y="15.2" width="2.25" height="1" fill="#9cdcfe" opacity="0.36"/><rect x="25.75" y="15.2" width="2.25" height="1" fill="#ce9178" opacity="0.34"/><rect x="28.75" y="15.2" width="1.50" height="1" fill="#ce9178" opacity="0.31"/><rect x="31.00" y="15.2" width="0.50" height="1" fill="#ce9178" opacity="0.52"/><rect x="0.50" y="16.5" width="2.00" height="1" fill="#c586c0" opacity="0.6"/><rect x="3.50" y="16.5" width="3.00" height="1" fill="#9cdcfe" opacity="0.38"/><rect x="7.25" y="16.5" width="4.50" height="1" fill="#9cdcfe" opacity="0.52"/><rect x="13.25" y="16.5" width="2.25" height="1" fill="#9cdcfe" opacity="0.35"/><rect x="16.25" y="16.5" width="2.25" height="1" fill="#ce9178" opacity="0.45"/><rect x="20.00" y="16.5" width="1.50" height="1" fill="#ce9178" opacity="0.4"/><rect x="22.00" y="16.5" width="4.50" height="1" fill="#ce9178" opacity="0.51"/><rect x="27.00" y="16.5" width="3.00" height="1" fill="#d4d4d4" opacity="0.49"/><rect x="30.50" y="16.5" width="1.00" height="1" fill="#ce9178" opacity="0.38"/><rect x="0.50" y="17.8" width="2.00" height="1" fill="#c586c0" opacity="0.6"/><rect x="3.50" y="17.8" width="6.00" height="1" fill="#d4d4d4" opacity="0.42"/><rect x="11.00" y="17.8" width="1.50" height="1" fill="#d4d4d4" opacity="0.45"/><rect x="14.00" y="17.8" width="6.00" height="1" fill="#d4d4d4" opacity="0.38"/><rect x="21.50" y="17.8" width="3.00" height="1" fill="#d4d4d4" opacity="0.47"/><rect x="26.00" y="17.8" width="5.50" height="1" fill="#ce9178" opacity="0.32"/><rect x="0.50" y="19.0" width="2.00" height="1" fill="#c586c0" opacity="0.6"/><rect x="3.50" y="19.0" width="2.25" height="1" fill="#9cdcfe" opacity="0.32"/><rect x="7.25" y="19.0" width="4.50" height="1" fill="#9cdcfe" opacity="0.52"/><rect x="13.25" y="19.0" width="1.50" height="1" fill="#d4d4d4" opacity="0.5"/><rect x="15.50" y="19.0" width="6.00" height="1" fill="#ce9178" opacity="0.47"/><rect x="23.00" y="19.0" width="4.50" height="1" fill="#9cdcfe" opacity="0.43"/><rect x="28.25" y="19.0" width="3.25" height="1" fill="#ce9178" opacity="0.36"/><rect x="0.50" y="20.2" width="2.00" height="1" fill="#c586c0" opacity="0.6"/><rect x="3.50" y="20.2" width="4.50" height="1" fill="#9cdcfe" opacity="0.36"/><rect x="9.50" y="20.2" width="6.00" height="1" fill="#9cdcfe" opacity="0.48"/><rect x="16.25" y="20.2" width="2.25" height="1" fill="#9cdcfe" opacity="0.4"/><rect x="19.25" y="20.2" width="2.25" height="1" fill="#ce9178" opacity="0.31"/><rect x="22.00" y="20.2" width="4.50" height="1" fill="#d4d4d4" opacity="0.48"/><rect x="27.00" y="20.2" width="4.50" height="1" fill="#d4d4d4" opacity="0.36"/><rect x="0.50" y="22.1" width="2.50" height="1" fill="#c586c0" opacity="0.6"/><rect x="3.50" y="22.1" width="4.00" height="1" fill="#569cd6" opacity="0.5"/><rect x="8.00" y="22.1" width="10.00" height="1" fill="#4ec9b0" opacity="0.5"/><rect x="19.00" y="22.1" width="5.00" height="1" fill="#569cd6" opacity="0.5"/><rect x="25.00" y="22.1" width="6.00" height="1" fill="#4ec9b0" opacity="0.5"/><rect x="4.50" y="24.3" width="6.00" height="1" fill="#9cdcfe" opacity="0.29"/><rect x="11.00" y="24.3" width="3.00" height="1" fill="#4ec9b0" opacity="0.43"/><rect x="14.50" y="24.3" width="6.00" height="1" fill="#9cdcfe" opacity="0.27"/><rect x="4.50" y="25.8" width="4.50" height="1" fill="#9cdcfe" opacity="0.5"/><rect x="9.50" y="25.8" width="4.50" height="1" fill="#d4d4d4" opacity="0.42"/><rect x="14.75" y="25.8" width="6.00" height="1" fill="#d4d4d4" opacity="0.32"/><rect x="21.25" y="25.8" width="3.00" height="1" fill="#d4d4d4" opacity="0.49"/><rect x="24.75" y="25.8" width="6.00" height="1" fill="#d4d4d4" opacity="0.31"/><rect x="4.50" y="27.3" width="4.50" height="1" fill="#ce9178" opacity="0.35"/><rect x="9.75" y="27.3" width="6.00" height="1" fill="#d4d4d4" opacity="0.42"/><rect x="3.00" y="28.8" width="2.25" height="1" fill="#9cdcfe" opacity="0.34"/><rect x="6.75" y="28.8" width="3.00" height="1" fill="#9cdcfe" opacity="0.27"/><rect x="6.00" y="31.8" width="1.50" height="1" fill="#9cdcfe" opacity="0.27"/><rect x="8.25" y="31.8" width="2.25" height="1" fill="#ce9178" opacity="0.34"/><rect x="11.00" y="31.8" width="3.00" height="1" fill="#9cdcfe" opacity="0.28"/><rect x="14.75" y="31.8" width="6.00" height="1" fill="#9cdcfe" opacity="0.33"/><rect x="21.50" y="31.8" width="4.50" height="1" fill="#d4d4d4" opacity="0.31"/><rect x="7.50" y="33.3" width="6.00" height="1" fill="#9cdcfe" opacity="0.27"/><rect x="6.00" y="34.8" width="1.50" height="1" fill="#ce9178" opacity="0.45"/><rect x="9.00" y="34.8" width="6.00" height="1" fill="#ce9178" opacity="0.37"/><rect x="3.00" y="36.3" width="3.00" height="1" fill="#d4d4d4" opacity="0.41"/><rect x="6.50" y="36.3" width="1.50" height="1" fill="#9cdcfe" opacity="0.3"/><rect x="8.50" y="36.3" width="2.25" height="1" fill="#569cd6" opacity="0.32"/><rect x="11.25" y="36.3" width="2.25" height="1" fill="#9cdcfe" opacity="0.4"/><rect x="6.00" y="37.8" width="1.50" height="1" fill="#9cdcfe" opacity="0.31"/><rect x="8.25" y="37.8" width="6.00" height="1" fill="#d4d4d4" opacity="0.35"/><rect x="15.75" y="37.8" width="2.25" height="1" fill="#4ec9b0" opacity="0.27"/><rect x="18.50" y="37.8" width="2.25" height="1" fill="#9cdcfe" opacity="0.43"/><rect x="6.00" y="39.3" width="1.50" height="1" fill="#569cd6" opacity="0.37"/><rect x="8.00" y="39.3" width="4.50" height="1" fill="#9cdcfe" opacity="0.48"/><rect x="14.00" y="39.3" width="1.50" height="1" fill="#d4d4d4" opacity="0.42"/><rect x="17.00" y="39.3" width="6.00" height="1" fill="#9cdcfe" opacity="0.49"/><rect x="23.75" y="39.3" width="2.25" height="1" fill="#ce9178" opacity="0.48"/><rect x="4.50" y="42.3" width="1.50" height="1" fill="#4ec9b0" opacity="0.41"/><rect x="6.50" y="42.3" width="2.25" height="1" fill="#4ec9b0" opacity="0.3"/><rect x="10.25" y="42.3" width="6.00" height="1" fill="#d4d4d4" opacity="0.44"/><rect x="3.00" y="43.8" width="2.25" height="1" fill="#4ec9b0" opacity="0.4"/><rect x="6.00" y="43.8" width="6.00" height="1" fill="#569cd6" opacity="0.39"/><rect x="12.50" y="43.8" width="4.50" height="1" fill="#9cdcfe" opacity="0.5"/><rect x="18.50" y="43.8" width="2.25" height="1" fill="#9cdcfe" opacity="0.3"/><rect x="22.25" y="43.8" width="6.00" height="1" fill="#569cd6" opacity="0.47"/><rect x="29.75" y="43.8" width="1.75" height="1" fill="#9cdcfe" opacity="0.29"/><rect x="6.00" y="45.3" width="4.50" height="1" fill="#d4d4d4" opacity="0.41"/><rect x="11.25" y="45.3" width="2.25" height="1" fill="#4ec9b0" opacity="0.46"/><rect x="14.00" y="45.3" width="4.50" height="1" fill="#ce9178" opacity="0.32"/><rect x="20.00" y="45.3" width="4.50" height="1" fill="#d4d4d4" opacity="0.26"/><rect x="7.50" y="46.8" width="2.25" height="1" fill="#d4d4d4" opacity="0.5"/><rect x="10.50" y="46.8" width="2.25" height="1" fill="#4ec9b0" opacity="0.26"/><rect x="14.25" y="46.8" width="6.00" height="1" fill="#d4d4d4" opacity="0.39"/><rect x="3.00" y="48.3" width="6.00" height="1" fill="#ce9178" opacity="0.42"/><rect x="9.50" y="48.3" width="3.00" height="1" fill="#9cdcfe" opacity="0.37"/><rect x="13.25" y="48.3" width="3.00" height="1" fill="#4ec9b0" opacity="0.39"/><rect x="17.00" y="48.3" width="6.00" height="1" fill="#9cdcfe" opacity="0.47"/><rect x="23.50" y="48.3" width="3.00" height="1" fill="#d4d4d4" opacity="0.43"/><rect x="27.25" y="48.3" width="1.50" height="1" fill="#d4d4d4" opacity="0.4"/><rect x="29.50" y="48.3" width="1.50" height="1" fill="#d4d4d4" opacity="0.31"/><rect x="7.50" y="49.8" width="1.50" height="1" fill="#d4d4d4" opacity="0.41"/><rect x="10.50" y="49.8" width="2.25" height="1" fill="#9cdcfe" opacity="0.37"/><rect x="14.25" y="49.8" width="4.50" height="1" fill="#d4d4d4" opacity="0.26"/><rect x="19.50" y="49.8" width="6.00" height="1" fill="#569cd6" opacity="0.25"/><rect x="26.00" y="49.8" width="3.00" height="1" fill="#9cdcfe" opacity="0.32"/><rect x="29.75" y="49.8" width="1.50" height="1" fill="#9cdcfe" opacity="0.44"/><rect x="1.50" y="51.3" width="2.25" height="1" fill="#ce9178" opacity="0.37"/><rect x="5.25" y="51.3" width="6.00" height="1" fill="#569cd6" opacity="0.36"/><rect x="11.75" y="51.3" width="3.00" height="1" fill="#9cdcfe" opacity="0.34"/><rect x="15.50" y="51.3" width="4.50" height="1" fill="#d4d4d4" opacity="0.36"/><rect x="20.50" y="51.3" width="1.50" height="1" fill="#ce9178" opacity="0.46"/><rect x="23.50" y="51.3" width="6.00" height="1" fill="#9cdcfe" opacity="0.34"/><rect x="30.00" y="51.3" width="1.50" height="1" fill="#9cdcfe" opacity="0.45"/><rect x="3.00" y="52.8" width="1.50" height="1" fill="#ce9178" opacity="0.3"/><rect x="5.00" y="52.8" width="1.50" height="1" fill="#9cdcfe" opacity="0.46"/><rect x="7.00" y="52.8" width="6.00" height="1" fill="#9cdcfe" opacity="0.29"/><rect x="4.50" y="54.3" width="1.50" height="1" fill="#d4d4d4" opacity="0.43"/><rect x="6.50" y="54.3" width="6.00" height="1" fill="#9cdcfe" opacity="0.27"/><rect x="4.50" y="55.8" width="2.25" height="1" fill="#4ec9b0" opacity="0.39"/><rect x="8.25" y="55.8" width="1.50" height="1" fill="#4ec9b0" opacity="0.33"/><rect x="10.50" y="55.8" width="3.00" height="1" fill="#4ec9b0" opacity="0.26"/><rect x="7.50" y="58.8" width="2.25" height="1" fill="#9cdcfe" opacity="0.48"/><rect x="10.25" y="58.8" width="3.00" height="1" fill="#ce9178" opacity="0.43"/><rect x="14.75" y="58.8" width="2.25" height="1" fill="#d4d4d4" opacity="0.34"/><rect x="18.50" y="58.8" width="4.50" height="1" fill="#d4d4d4" opacity="0.35"/><rect x="23.75" y="58.8" width="1.50" height="1" fill="#9cdcfe" opacity="0.32"/><rect x="25.75" y="58.8" width="4.50" height="1" fill="#569cd6" opacity="0.46"/><rect x="3.00" y="60.3" width="4.50" height="1" fill="#9cdcfe" opacity="0.32"/><rect x="9.00" y="60.3" width="4.50" height="1" fill="#d4d4d4" opacity="0.26"/><rect x="15.00" y="60.3" width="4.50" height="1" fill="#9cdcfe" opacity="0.41"/><rect x="3.00" y="61.8" width="1.50" height="1" fill="#ce9178" opacity="0.41"/><rect x="6.00" y="61.8" width="3.00" height="1" fill="#4ec9b0" opacity="0.3"/><rect x="9.50" y="61.8" width="4.50" height="1" fill="#d4d4d4" opacity="0.29"/><rect x="14.50" y="61.8" width="2.25" height="1" fill="#9cdcfe" opacity="0.47"/><rect x="17.50" y="61.8" width="1.50" height="1" fill="#d4d4d4" opacity="0.46"/><rect x="19.75" y="61.8" width="2.25" height="1" fill="#569cd6" opacity="0.38"/><rect x="22.75" y="61.8" width="2.25" height="1" fill="#d4d4d4" opacity="0.43"/><rect x="25.50" y="61.8" width="3.00" height="1" fill="#ce9178" opacity="0.29"/><rect x="7.50" y="63.3" width="3.00" height="1" fill="#9cdcfe" opacity="0.47"/><rect x="11.00" y="63.3" width="3.00" height="1" fill="#569cd6" opacity="0.39"/><rect x="14.50" y="63.3" width="4.50" height="1" fill="#9cdcfe" opacity="0.41"/><rect x="19.75" y="63.3" width="3.00" height="1" fill="#d4d4d4" opacity="0.45"/><rect x="24.25" y="63.3" width="2.25" height="1" fill="#9cdcfe" opacity="0.47"/><rect x="27.00" y="63.3" width="4.50" height="1" fill="#d4d4d4" opacity="0.37"/><rect x="3.00" y="64.8" width="4.50" height="1" fill="#4ec9b0" opacity="0.42"/><rect x="8.25" y="64.8" width="2.25" height="1" fill="#4ec9b0" opacity="0.26"/><rect x="12.00" y="64.8" width="1.50" height="1" fill="#9cdcfe" opacity="0.29"/><rect x="14.00" y="64.8" width="4.50" height="1" fill="#9cdcfe" opacity="0.27"/><rect x="19.25" y="64.8" width="1.50" height="1" fill="#9cdcfe" opacity="0.38"/><rect x="21.50" y="64.8" width="4.50" height="1" fill="#d4d4d4" opacity="0.35"/><rect x="26.75" y="64.8" width="4.75" height="1" fill="#9cdcfe" opacity="0.32"/><rect x="7.50" y="66.3" width="3.00" height="1" fill="#ce9178" opacity="0.41"/><rect x="11.25" y="66.3" width="3.00" height="1" fill="#569cd6" opacity="0.28"/><rect x="15.00" y="66.3" width="3.00" height="1" fill="#d4d4d4" opacity="0.41"/><rect x="18.50" y="66.3" width="3.00" height="1" fill="#9cdcfe" opacity="0.25"/><rect x="22.25" y="66.3" width="1.50" height="1" fill="#9cdcfe" opacity="0.45"/><rect x="25.25" y="66.3" width="2.25" height="1" fill="#9cdcfe" opacity="0.26"/><rect x="28.00" y="66.3" width="2.25" height="1" fill="#569cd6" opacity="0.39"/><rect x="3.00" y="67.8" width="6.00" height="1" fill="#9cdcfe" opacity="0.4"/><rect x="9.50" y="67.8" width="1.50" height="1" fill="#9cdcfe" opacity="0.48"/><rect x="11.75" y="67.8" width="4.50" height="1" fill="#d4d4d4" opacity="0.33"/><rect x="17.75" y="67.8" width="4.50" height="1" fill="#4ec9b0" opacity="0.45"/><rect x="23.00" y="67.8" width="1.50" height="1" fill="#d4d4d4" opacity="0.32"/><rect x="25.00" y="67.8" width="3.00" height="1" fill="#4ec9b0" opacity="0.44"/><rect x="28.50" y="67.8" width="1.50" height="1" fill="#ce9178" opacity="0.37"/><rect x="3.00" y="69.3" width="6.00" height="1" fill="#ce9178" opacity="0.5"/><rect x="9.75" y="69.3" width="4.50" height="1" fill="#9cdcfe" opacity="0.48"/><rect x="3.00" y="70.8" width="1.50" height="1" fill="#9cdcfe" opacity="0.43"/><rect x="5.00" y="70.8" width="3.00" height="1" fill="#9cdcfe" opacity="0.43"/><rect x="8.50" y="70.8" width="1.50" height="1" fill="#ce9178" opacity="0.27"/><rect x="10.75" y="70.8" width="3.00" height="1" fill="#4ec9b0" opacity="0.45"/><rect x="14.50" y="70.8" width="3.00" height="1" fill="#9cdcfe" opacity="0.39"/><rect x="19.00" y="70.8" width="2.25" height="1" fill="#d4d4d4" opacity="0.27"/><rect x="21.75" y="70.8" width="2.25" height="1" fill="#4ec9b0" opacity="0.41"/><rect x="25.50" y="70.8" width="3.00" height="1" fill="#569cd6" opacity="0.35"/><rect x="30.00" y="70.8" width="1.50" height="1" fill="#569cd6" opacity="0.38"/><rect x="6.00" y="72.3" width="2.25" height="1" fill="#ce9178" opacity="0.34"/><rect x="9.00" y="72.3" width="6.00" height="1" fill="#d4d4d4" opacity="0.41"/><rect x="15.75" y="72.3" width="3.00" height="1" fill="#d4d4d4" opacity="0.42"/><rect x="4.50" y="73.8" width="6.00" height="1" fill="#4ec9b0" opacity="0.44"/><rect x="12.00" y="73.8" width="3.00" height="1" fill="#d4d4d4" opacity="0.42"/><rect x="16.50" y="73.8" width="6.00" height="1" fill="#9cdcfe" opacity="0.27"/><rect x="24.00" y="73.8" width="2.25" height="1" fill="#d4d4d4" opacity="0.46"/><rect x="27.00" y="73.8" width="4.50" height="1" fill="#d4d4d4" opacity="0.31"/><rect x="7.50" y="76.8" width="1.50" height="1" fill="#d4d4d4" opacity="0.39"/><rect x="9.50" y="76.8" width="2.25" height="1" fill="#9cdcfe" opacity="0.42"/><rect x="13.25" y="76.8" width="6.00" height="1" fill="#d4d4d4" opacity="0.41"/><rect x="20.75" y="76.8" width="4.50" height="1" fill="#4ec9b0" opacity="0.32"/><rect x="26.75" y="76.8" width="2.25" height="1" fill="#4ec9b0" opacity="0.3"/><rect x="4.50" y="78.3" width="3.00" height="1" fill="#4ec9b0" opacity="0.37"/><rect x="9.00" y="78.3" width="2.25" height="1" fill="#9cdcfe" opacity="0.42"/><rect x="12.00" y="78.3" width="3.00" height="1" fill="#569cd6" opacity="0.38"/><rect x="16.50" y="78.3" width="1.50" height="1" fill="#d4d4d4" opacity="0.42"/><rect x="18.50" y="78.3" width="2.25" height="1" fill="#9cdcfe" opacity="0.33"/><rect x="4.50" y="79.8" width="6.00" height="1" fill="#9cdcfe" opacity="0.26"/><rect x="11.00" y="79.8" width="4.50" height="1" fill="#9cdcfe" opacity="0.29"/><rect x="3.00" y="81.3" width="1.50" height="1" fill="#9cdcfe" opacity="0.29"/><rect x="6.00" y="81.3" width="4.50" height="1" fill="#ce9178" opacity="0.29"/><rect x="11.25" y="81.3" width="3.00" height="1" fill="#9cdcfe" opacity="0.42"/><rect x="14.75" y="81.3" width="6.00" height="1" fill="#9cdcfe" opacity="0.27"/><rect x="7.50" y="84.3" width="6.00" height="1" fill="#4ec9b0" opacity="0.45"/><rect x="14.25" y="84.3" width="3.00" height="1" fill="#9cdcfe" opacity="0.45"/><rect x="18.00" y="84.3" width="1.50" height="1" fill="#d4d4d4" opacity="0.29"/><rect x="21.00" y="84.3" width="4.50" height="1" fill="#9cdcfe" opacity="0.33"/><rect x="26.00" y="84.3" width="4.50" height="1" fill="#4ec9b0" opacity="0.35"/><rect x="7.50" y="85.8" width="6.00" height="1" fill="#9cdcfe" opacity="0.35"/><rect x="15.00" y="85.8" width="1.50" height="1" fill="#d4d4d4" opacity="0.31"/><rect x="17.25" y="85.8" width="3.00" height="1" fill="#4ec9b0" opacity="0.31"/><rect x="4.50" y="87.3" width="2.25" height="1" fill="#569cd6" opacity="0.34"/><rect x="7.50" y="87.3" width="3.00" height="1" fill="#ce9178" opacity="0.26"/><rect x="12.00" y="87.3" width="1.50" height="1" fill="#d4d4d4" opacity="0.27"/><rect x="14.00" y="87.3" width="4.50" height="1" fill="#ce9178" opacity="0.33"/><rect x="19.25" y="87.3" width="3.00" height="1" fill="#4ec9b0" opacity="0.31"/><rect x="23.00" y="87.3" width="1.50" height="1" fill="#9cdcfe" opacity="0.29"/><rect x="26.00" y="87.3" width="1.50" height="1" fill="#d4d4d4" opacity="0.34"/><rect x="28.25" y="87.3" width="3.25" height="1" fill="#4ec9b0" opacity="0.37"/><rect x="3.00" y="88.8" width="6.00" height="1" fill="#4ec9b0" opacity="0.49"/><rect x="4.50" y="90.3" width="2.25" height="1" fill="#d4d4d4" opacity="0.32"/><rect x="7.25" y="90.3" width="1.50" height="1" fill="#9cdcfe" opacity="0.41"/><rect x="9.25" y="90.3" width="1.50" height="1" fill="#569cd6" opacity="0.4"/><rect x="12.25" y="90.3" width="2.25" height="1" fill="#9cdcfe" opacity="0.48"/><rect x="7.50" y="91.8" width="3.00" height="1" fill="#9cdcfe" opacity="0.42"/><rect x="11.00" y="91.8" width="4.50" height="1" fill="#4ec9b0" opacity="0.36"/><rect x="16.00" y="91.8" width="3.00" height="1" fill="#ce9178" opacity="0.44"/><rect x="19.75" y="91.8" width="1.50" height="1" fill="#9cdcfe" opacity="0.38"/><rect x="21.75" y="91.8" width="1.50" height="1" fill="#ce9178" opacity="0.39"/><rect x="24.75" y="91.8" width="4.50" height="1" fill="#569cd6" opacity="0.49"/><rect x="1.50" y="93.3" width="3.00" height="1" fill="#9cdcfe" opacity="0.32"/><rect x="5.25" y="93.3" width="3.00" height="1" fill="#9cdcfe" opacity="0.43"/><rect x="8.75" y="93.3" width="6.00" height="1" fill="#9cdcfe" opacity="0.39"/><rect x="15.50" y="93.3" width="6.00" height="1" fill="#9cdcfe" opacity="0.35"/><rect x="23.00" y="93.3" width="2.25" height="1" fill="#9cdcfe" opacity="0.49"/><rect x="6.00" y="94.8" width="6.00" height="1" fill="#569cd6" opacity="0.35"/><rect x="12.75" y="94.8" width="3.00" height="1" fill="#9cdcfe" opacity="0.37"/><rect x="17.25" y="94.8" width="3.00" height="1" fill="#d4d4d4" opacity="0.38"/><rect x="21.00" y="94.8" width="2.25" height="1" fill="#9cdcfe" opacity="0.29"/><rect x="24.00" y="94.8" width="4.50" height="1" fill="#9cdcfe" opacity="0.25"/><rect x="29.00" y="94.8" width="2.50" height="1" fill="#d4d4d4" opacity="0.48"/><rect x="3.00" y="96.3" width="2.25" height="1" fill="#d4d4d4" opacity="0.37"/><rect x="6.75" y="96.3" width="2.25" height="1" fill="#d4d4d4" opacity="0.49"/><rect x="9.75" y="96.3" width="3.00" height="1" fill="#9cdcfe" opacity="0.47"/><rect x="13.25" y="96.3" width="3.00" height="1" fill="#d4d4d4" opacity="0.35"/><rect x="17.00" y="96.3" width="3.00" height="1" fill="#569cd6" opacity="0.35"/><rect x="20.50" y="96.3" width="6.00" height="1" fill="#9cdcfe" opacity="0.47"/><rect x="27.25" y="96.3" width="4.25" height="1" fill="#9cdcfe" opacity="0.47"/><rect x="3.00" y="97.8" width="6.00" height="1" fill="#4ec9b0" opacity="0.31"/><rect x="10.50" y="97.8" width="3.00" height="1" fill="#569cd6" opacity="0.29"/><rect x="14.00" y="97.8" width="6.00" height="1" fill="#9cdcfe" opacity="0.39"/><rect x="20.75" y="97.8" width="2.25" height="1" fill="#ce9178" opacity="0.42"/><rect x="23.75" y="97.8" width="6.00" height="1" fill="#9cdcfe" opacity="0.46"/><rect x="6.00" y="99.3" width="2.25" height="1" fill="#9cdcfe" opacity="0.34"/><rect x="8.75" y="99.3" width="6.00" height="1" fill="#4ec9b0" opacity="0.33"/><rect x="15.50" y="99.3" width="1.50" height="1" fill="#d4d4d4" opacity="0.47"/><rect x="17.75" y="99.3" width="2.25" height="1" fill="#d4d4d4" opacity="0.37"/><rect x="21.50" y="99.3" width="2.25" height="1" fill="#9cdcfe" opacity="0.33"/><rect x="24.50" y="99.3" width="3.00" height="1" fill="#ce9178" opacity="0.29"/><rect x="3.00" y="100.8" width="4.50" height="1" fill="#d4d4d4" opacity="0.45"/><rect x="9.00" y="100.8" width="2.25" height="1" fill="#d4d4d4" opacity="0.43"/><rect x="12.00" y="100.8" width="6.00" height="1" fill="#9cdcfe" opacity="0.34"/><rect x="18.50" y="100.8" width="3.00" height="1" fill="#9cdcfe" opacity="0.45"/><rect x="23.00" y="100.8" width="3.00" height="1" fill="#ce9178" opacity="0.35"/><rect x="26.75" y="100.8" width="1.50" height="1" fill="#d4d4d4" opacity="0.34"/><rect x="3.00" y="102.3" width="3.00" height="1" fill="#569cd6" opacity="0.32"/><rect x="7.50" y="102.3" width="3.00" height="1" fill="#9cdcfe" opacity="0.29"/><rect x="11.00" y="102.3" width="4.50" height="1" fill="#d4d4d4" opacity="0.36"/><rect x="16.00" y="102.3" width="1.50" height="1" fill="#9cdcfe" opacity="0.3"/><rect x="19.00" y="102.3" width="4.50" height="1" fill="#9cdcfe" opacity="0.49"/><rect x="4.50" y="103.8" width="4.50" height="1" fill="#9cdcfe" opacity="0.39"/><rect x="10.50" y="103.8" width="4.50" height="1" fill="#4ec9b0" opacity="0.4"/><rect x="4.50" y="105.3" width="2.25" height="1" fill="#9cdcfe" opacity="0.45"/><rect x="7.25" y="105.3" width="1.50" height="1" fill="#569cd6" opacity="0.28"/><rect x="9.25" y="105.3" width="3.00" height="1" fill="#9cdcfe" opacity="0.32"/><rect x="13.00" y="105.3" width="3.00" height="1" fill="#4ec9b0" opacity="0.27"/><rect x="17.50" y="105.3" width="3.00" height="1" fill="#ce9178" opacity="0.36"/><rect x="22.00" y="105.3" width="1.50" height="1" fill="#4ec9b0" opacity="0.31"/><rect x="24.00" y="105.3" width="2.25" height="1" fill="#d4d4d4" opacity="0.47"/><rect x="27.75" y="105.3" width="3.75" height="1" fill="#9cdcfe" opacity="0.32"/><rect x="3.00" y="106.8" width="6.00" height="1" fill="#9cdcfe" opacity="0.4"/><rect x="9.50" y="106.8" width="3.00" height="1" fill="#d4d4d4" opacity="0.37"/><rect x="13.25" y="106.8" width="1.50" height="1" fill="#569cd6" opacity="0.25"/><rect x="15.25" y="106.8" width="3.00" height="1" fill="#4ec9b0" opacity="0.25"/><rect x="3.00" y="108.3" width="3.00" height="1" fill="#9cdcfe" opacity="0.36"/><rect x="6.50" y="108.3" width="2.25" height="1" fill="#569cd6" opacity="0.27"/><rect x="9.25" y="108.3" width="2.25" height="1" fill="#9cdcfe" opacity="0.36"/><rect x="13.00" y="108.3" width="6.00" height="1" fill="#ce9178" opacity="0.38"/><rect x="19.75" y="108.3" width="4.50" height="1" fill="#9cdcfe" opacity="0.29"/><rect x="25.00" y="108.3" width="1.50" height="1" fill="#4ec9b0" opacity="0.27"/><rect x="27.25" y="108.3" width="3.00" height="1" fill="#9cdcfe" opacity="0.3"/><rect x="4.50" y="109.8" width="2.25" height="1" fill="#ce9178" opacity="0.32"/><rect x="7.50" y="109.8" width="2.25" height="1" fill="#4ec9b0" opacity="0.47"/><rect x="10.25" y="109.8" width="4.50" height="1" fill="#4ec9b0" opacity="0.26"/><rect x="15.50" y="109.8" width="6.00" height="1" fill="#d4d4d4" opacity="0.3"/><rect x="23.00" y="109.8" width="4.50" height="1" fill="#ce9178" opacity="0.41"/><rect x="29.00" y="109.8" width="2.25" height="1" fill="#9cdcfe" opacity="0.49"/><rect x="6.00" y="111.3" width="6.00" height="1" fill="#d4d4d4" opacity="0.41"/><rect x="12.75" y="111.3" width="2.25" height="1" fill="#d4d4d4" opacity="0.42"/><rect x="16.50" y="111.3" width="1.50" height="1" fill="#9cdcfe" opacity="0.31"/><rect x="19.50" y="111.3" width="6.00" height="1" fill="#569cd6" opacity="0.49"/><rect x="4.50" y="112.8" width="6.00" height="1" fill="#9cdcfe" opacity="0.46"/><rect x="11.25" y="112.8" width="6.00" height="1" fill="#ce9178" opacity="0.25"/><rect x="18.75" y="112.8" width="6.00" height="1" fill="#ce9178" opacity="0.48"/><rect x="25.25" y="112.8" width="4.50" height="1" fill="#9cdcfe" opacity="0.5"/><rect x="30.25" y="112.8" width="1.25" height="1" fill="#ce9178" opacity="0.45"/><rect x="3.00" y="114.3" width="2.25" height="1" fill="#d4d4d4" opacity="0.28"/><rect x="6.00" y="114.3" width="3.00" height="1" fill="#9cdcfe" opacity="0.39"/><rect x="10.50" y="114.3" width="4.50" height="1" fill="#9cdcfe" opacity="0.44"/><rect x="15.50" y="114.3" width="2.25" height="1" fill="#4ec9b0" opacity="0.39"/><rect x="3.00" y="115.8" width="4.50" height="1" fill="#d4d4d4" opacity="0.48"/><rect x="9.00" y="115.8" width="6.00" height="1" fill="#ce9178" opacity="0.29"/><rect x="4.50" y="120.3" width="2.25" height="1" fill="#9cdcfe" opacity="0.41"/><rect x="7.25" y="120.3" width="3.00" height="1" fill="#d4d4d4" opacity="0.32"/><rect x="11.75" y="120.3" width="6.00" height="1" fill="#9cdcfe" opacity="0.43"/><rect x="19.25" y="120.3" width="3.00" height="1" fill="#569cd6" opacity="0.42"/><rect x="23.75" y="120.3" width="6.00" height="1" fill="#9cdcfe" opacity="0.34"/><rect x="31.25" y="120.3" width="0.25" height="1" fill="#ce9178" opacity="0.34"/><rect x="1.50" y="121.8" width="3.00" height="1" fill="#9cdcfe" opacity="0.48"/><rect x="5.25" y="121.8" width="4.50" height="1" fill="#d4d4d4" opacity="0.35"/><rect x="10.25" y="121.8" width="1.50" height="1" fill="#d4d4d4" opacity="0.26"/><rect x="12.25" y="121.8" width="1.50" height="1" fill="#9cdcfe" opacity="0.37"/><rect x="15.25" y="121.8" width="4.50" height="1" fill="#d4d4d4" opacity="0.48"/><rect x="20.50" y="121.8" width="4.50" height="1" fill="#4ec9b0" opacity="0.46"/><rect x="26.50" y="121.8" width="2.25" height="1" fill="#9cdcfe" opacity="0.47"/><rect x="30.25" y="121.8" width="1.25" height="1" fill="#d4d4d4" opacity="0.38"/><rect x="4.50" y="123.3" width="3.00" height="1" fill="#d4d4d4" opacity="0.31"/><rect x="8.00" y="123.3" width="1.50" height="1" fill="#9cdcfe" opacity="0.36"/><rect x="11.00" y="123.3" width="4.50" height="1" fill="#4ec9b0" opacity="0.25"/><rect x="6.00" y="124.8" width="2.25" height="1" fill="#9cdcfe" opacity="0.39"/><rect x="9.00" y="124.8" width="4.50" height="1" fill="#d4d4d4" opacity="0.25"/><rect x="14.00" y="124.8" width="1.50" height="1" fill="#9cdcfe" opacity="0.49"/><rect x="16.25" y="124.8" width="1.50" height="1" fill="#9cdcfe" opacity="0.4"/><rect x="18.25" y="124.8" width="4.50" height="1" fill="#9cdcfe" opacity="0.32"/><rect x="1.50" y="126.3" width="2.25" height="1" fill="#9cdcfe" opacity="0.43"/><rect x="4.50" y="126.3" width="3.00" height="1" fill="#ce9178" opacity="0.31"/><rect x="8.00" y="126.3" width="1.50" height="1" fill="#4ec9b0" opacity="0.32"/><rect x="11.00" y="126.3" width="6.00" height="1" fill="#ce9178" opacity="0.36"/><rect x="6.00" y="127.8" width="6.00" height="1" fill="#569cd6" opacity="0.48"/><rect x="13.50" y="127.8" width="3.00" height="1" fill="#d4d4d4" opacity="0.4"/><rect x="17.25" y="127.8" width="6.00" height="1" fill="#ce9178" opacity="0.47"/><rect x="23.75" y="127.8" width="2.25" height="1" fill="#569cd6" opacity="0.38"/><rect x="26.75" y="127.8" width="3.00" height="1" fill="#9cdcfe" opacity="0.35"/><rect x="31.25" y="127.8" width="0.25" height="1" fill="#9cdcfe" opacity="0.27"/><rect x="7.50" y="129.3" width="3.00" height="1" fill="#ce9178" opacity="0.36"/><rect x="12.00" y="129.3" width="6.00" height="1" fill="#9cdcfe" opacity="0.3"/><rect x="18.50" y="129.3" width="4.50" height="1" fill="#9cdcfe" opacity="0.43"/><rect x="23.75" y="129.3" width="2.25" height="1" fill="#9cdcfe" opacity="0.49"/><rect x="26.75" y="129.3" width="3.00" height="1" fill="#4ec9b0" opacity="0.46"/><rect x="30.50" y="129.3" width="1.00" height="1" fill="#ce9178" opacity="0.26"/><rect x="3.00" y="130.8" width="4.50" height="1" fill="#d4d4d4" opacity="0.34"/><rect x="8.25" y="130.8" width="1.50" height="1" fill="#d4d4d4" opacity="0.46"/><rect x="10.25" y="130.8" width="2.25" height="1" fill="#9cdcfe" opacity="0.26"/><rect x="3.00" y="132.3" width="3.00" height="1" fill="#d4d4d4" opacity="0.42"/><rect x="6.75" y="132.3" width="1.50" height="1" fill="#9cdcfe" opacity="0.37"/><rect x="8.75" y="132.3" width="6.00" height="1" fill="#9cdcfe" opacity="0.32"/><rect x="1.50" y="133.8" width="4.50" height="1" fill="#9cdcfe" opacity="0.44"/><rect x="6.75" y="133.8" width="1.50" height="1" fill="#9cdcfe" opacity="0.39"/><rect x="8.75" y="133.8" width="3.00" height="1" fill="#9cdcfe" opacity="0.44"/><rect x="12.50" y="133.8" width="2.25" height="1" fill="#9cdcfe" opacity="0.42"/><rect x="15.25" y="133.8" width="2.25" height="1" fill="#4ec9b0" opacity="0.41"/><rect x="19.00" y="133.8" width="6.00" height="1" fill="#d4d4d4" opacity="0.33"/><rect x="25.75" y="133.8" width="3.00" height="1" fill="#9cdcfe" opacity="0.47"/><rect x="1.50" y="135.3" width="4.50" height="1" fill="#d4d4d4" opacity="0.37"/><rect x="6.50" y="135.3" width="4.50" height="1" fill="#9cdcfe" opacity="0.25"/><rect x="4.50" y="136.8" width="3.00" height="1" fill="#ce9178" opacity="0.33"/><rect x="9.00" y="136.8" width="1.50" height="1" fill="#9cdcfe" opacity="0.42"/><rect x="11.25" y="136.8" width="6.00" height="1" fill="#4ec9b0" opacity="0.42"/><rect x="17.75" y="136.8" width="1.50" height="1" fill="#9cdcfe" opacity="0.31"/><rect x="19.75" y="136.8" width="6.00" height="1" fill="#569cd6" opacity="0.28"/><rect x="26.25" y="136.8" width="5.25" height="1" fill="#d4d4d4" opacity="0.44"/><rect x="7.50" y="138.3" width="2.25" height="1" fill="#569cd6" opacity="0.49"/><rect x="10.25" y="138.3" width="2.25" height="1" fill="#569cd6" opacity="0.27"/><rect x="13.00" y="138.3" width="2.25" height="1" fill="#569cd6" opacity="0.26"/><rect x="6.00" y="139.8" width="3.00" height="1" fill="#569cd6" opacity="0.42"/><rect x="9.50" y="139.8" width="4.50" height="1" fill="#ce9178" opacity="0.47"/><rect x="15.50" y="139.8" width="3.00" height="1" fill="#9cdcfe" opacity="0.3"/><rect x="20.00" y="139.8" width="1.50" height="1" fill="#d4d4d4" opacity="0.48"/><rect x="23.00" y="139.8" width="1.50" height="1" fill="#9cdcfe" opacity="0.3"/><rect x="25.25" y="139.8" width="2.25" height="1" fill="#ce9178" opacity="0.48"/><rect x="28.25" y="139.8" width="2.25" height="1" fill="#4ec9b0" opacity="0.36"/><rect x="4.50" y="141.3" width="2.25" height="1" fill="#569cd6" opacity="0.4"/><rect x="7.25" y="141.3" width="3.00" height="1" fill="#569cd6" opacity="0.37"/><rect x="11.75" y="141.3" width="4.50" height="1" fill="#ce9178" opacity="0.34"/><rect x="16.75" y="141.3" width="6.00" height="1" fill="#d4d4d4" opacity="0.27"/><rect x="4.50" y="144.3" width="2.25" height="1" fill="#d4d4d4" opacity="0.31"/><rect x="8.25" y="144.3" width="1.50" height="1" fill="#9cdcfe" opacity="0.26"/><rect x="10.25" y="144.3" width="4.50" height="1" fill="#9cdcfe" opacity="0.29"/><rect x="15.25" y="144.3" width="4.50" height="1" fill="#4ec9b0" opacity="0.31"/><rect x="20.50" y="144.3" width="4.50" height="1" fill="#9cdcfe" opacity="0.47"/><rect x="25.50" y="144.3" width="6.00" height="1" fill="#9cdcfe" opacity="0.44"/><rect x="3.00" y="145.8" width="6.00" height="1" fill="#d4d4d4" opacity="0.32"/><rect x="10.50" y="145.8" width="2.25" height="1" fill="#ce9178" opacity="0.28"/><rect x="13.25" y="145.8" width="6.00" height="1" fill="#569cd6" opacity="0.29"/><rect x="1.50" y="147.3" width="1.50" height="1" fill="#d4d4d4" opacity="0.39"/><rect x="3.75" y="147.3" width="2.25" height="1" fill="#ce9178" opacity="0.37"/><rect x="7.50" y="147.3" width="3.00" height="1" fill="#9cdcfe" opacity="0.48"/><rect x="12.00" y="147.3" width="3.00" height="1" fill="#d4d4d4" opacity="0.36"/><rect x="16.50" y="147.3" width="6.00" height="1" fill="#9cdcfe" opacity="0.31"/><rect x="24.00" y="147.3" width="3.00" height="1" fill="#d4d4d4" opacity="0.45"/><rect x="4.50" y="148.8" width="1.50" height="1" fill="#9cdcfe" opacity="0.48"/><rect x="7.50" y="148.8" width="4.50" height="1" fill="#9cdcfe" opacity="0.36"/><rect x="12.75" y="148.8" width="4.50" height="1" fill="#d4d4d4" opacity="0.26"/><rect x="4.50" y="150.3" width="2.25" height="1" fill="#9cdcfe" opacity="0.43"/><rect x="8.25" y="150.3" width="6.00" height="1" fill="#ce9178" opacity="0.44"/><rect x="4.50" y="151.8" width="6.00" height="1" fill="#569cd6" opacity="0.26"/><rect x="11.00" y="151.8" width="1.50" height="1" fill="#d4d4d4" opacity="0.31"/><rect x="13.00" y="151.8" width="6.00" height="1" fill="#569cd6" opacity="0.37"/><rect x="19.75" y="151.8" width="3.00" height="1" fill="#9cdcfe" opacity="0.45"/><rect x="23.50" y="151.8" width="6.00" height="1" fill="#9cdcfe" opacity="0.48"/><rect x="4.50" y="153.3" width="6.00" height="1" fill="#ce9178" opacity="0.38"/><rect x="11.00" y="153.3" width="2.25" height="1" fill="#569cd6" opacity="0.39"/><rect x="13.75" y="153.3" width="3.00" height="1" fill="#9cdcfe" opacity="0.46"/><rect x="17.50" y="153.3" width="3.00" height="1" fill="#d4d4d4" opacity="0.42"/><rect x="21.00" y="153.3" width="3.00" height="1" fill="#d4d4d4" opacity="0.35"/><rect x="25.50" y="153.3" width="4.50" height="1" fill="#d4d4d4" opacity="0.29"/><rect x="7.50" y="154.8" width="2.25" height="1" fill="#9cdcfe" opacity="0.3"/><rect x="10.25" y="154.8" width="1.50" height="1" fill="#9cdcfe" opacity="0.37"/><rect x="12.50" y="154.8" width="6.00" height="1" fill="#d4d4d4" opacity="0.47"/><rect x="19.00" y="154.8" width="4.50" height="1" fill="#d4d4d4" opacity="0.38"/><rect x="4.50" y="156.3" width="1.50" height="1" fill="#569cd6" opacity="0.3"/><rect x="6.75" y="156.3" width="4.50" height="1" fill="#4ec9b0" opacity="0.47"/><rect x="11.75" y="156.3" width="2.25" height="1" fill="#9cdcfe" opacity="0.37"/><rect x="4.50" y="157.8" width="2.25" height="1" fill="#569cd6" opacity="0.38"/><rect x="7.50" y="157.8" width="1.50" height="1" fill="#d4d4d4" opacity="0.43"/><rect x="10.50" y="157.8" width="4.50" height="1" fill="#d4d4d4" opacity="0.26"/><rect x="15.75" y="157.8" width="3.00" height="1" fill="#9cdcfe" opacity="0.42"/><rect x="19.50" y="157.8" width="6.00" height="1" fill="#9cdcfe" opacity="0.45"/><rect x="3.00" y="159.3" width="4.50" height="1" fill="#d4d4d4" opacity="0.34"/><rect x="8.25" y="159.3" width="3.00" height="1" fill="#9cdcfe" opacity="0.28"/><rect x="7.50" y="160.8" width="1.50" height="1" fill="#4ec9b0" opacity="0.42"/><rect x="9.50" y="160.8" width="6.00" height="1" fill="#ce9178" opacity="0.41"/><rect x="3.00" y="162.3" width="6.00" height="1" fill="#9cdcfe" opacity="0.41"/><rect x="9.50" y="162.3" width="3.00" height="1" fill="#569cd6" opacity="0.43"/><rect x="14.00" y="162.3" width="3.00" height="1" fill="#569cd6" opacity="0.43"/><rect x="17.50" y="162.3" width="1.50" height="1" fill="#d4d4d4" opacity="0.32"/><rect x="19.50" y="162.3" width="4.50" height="1" fill="#d4d4d4" opacity="0.3"/><rect x="1.50" y="163.8" width="1.50" height="1" fill="#d4d4d4" opacity="0.31"/><rect x="4.50" y="163.8" width="3.00" height="1" fill="#d4d4d4" opacity="0.46"/><rect x="8.00" y="163.8" width="4.50" height="1" fill="#569cd6" opacity="0.47"/><rect x="14.00" y="163.8" width="2.25" height="1" fill="#d4d4d4" opacity="0.48"/><rect x="17.00" y="163.8" width="1.50" height="1" fill="#569cd6" opacity="0.34"/><rect x="19.25" y="163.8" width="2.25" height="1" fill="#9cdcfe" opacity="0.32"/><rect x="23.00" y="163.8" width="4.50" height="1" fill="#4ec9b0" opacity="0.26"/><rect x="28.25" y="163.8" width="2.25" height="1" fill="#9cdcfe" opacity="0.33"/><rect x="31.25" y="163.8" width="0.25" height="1" fill="#9cdcfe" opacity="0.35"/><rect x="6.00" y="165.3" width="4.50" height="1" fill="#4ec9b0" opacity="0.34"/><rect x="11.00" y="165.3" width="6.00" height="1" fill="#9cdcfe" opacity="0.39"/><rect x="18.50" y="165.3" width="2.25" height="1" fill="#9cdcfe" opacity="0.49"/><rect x="21.50" y="165.3" width="1.50" height="1" fill="#9cdcfe" opacity="0.31"/><rect x="24.50" y="165.3" width="2.25" height="1" fill="#d4d4d4" opacity="0.29"/><rect x="27.50" y="165.3" width="4.00" height="1" fill="#d4d4d4" opacity="0.48"/><rect x="1.50" y="166.8" width="6.00" height="1" fill="#ce9178" opacity="0.4"/><rect x="9.00" y="166.8" width="4.50" height="1" fill="#4ec9b0" opacity="0.28"/><rect x="14.00" y="166.8" width="6.00" height="1" fill="#9cdcfe" opacity="0.32"/><rect x="1.50" y="169.8" width="1.50" height="1" fill="#ce9178" opacity="0.39"/><rect x="4.50" y="169.8" width="6.00" height="1" fill="#4ec9b0" opacity="0.49"/><rect x="12.00" y="169.8" width="2.25" height="1" fill="#d4d4d4" opacity="0.27"/><rect x="15.00" y="169.8" width="4.50" height="1" fill="#9cdcfe" opacity="0.44"/><rect x="3.00" y="171.3" width="1.50" height="1" fill="#ce9178" opacity="0.26"/><rect x="6.00" y="171.3" width="4.50" height="1" fill="#d4d4d4" opacity="0.47"/><rect x="11.00" y="171.3" width="3.00" height="1" fill="#9cdcfe" opacity="0.45"/><rect x="14.50" y="171.3" width="1.50" height="1" fill="#9cdcfe" opacity="0.37"/><rect x="4.50" y="174.3" width="4.50" height="1" fill="#d4d4d4" opacity="0.46"/><rect x="9.75" y="174.3" width="1.50" height="1" fill="#d4d4d4" opacity="0.36"/><rect x="11.75" y="174.3" width="6.00" height="1" fill="#4ec9b0" opacity="0.38"/><rect x="1.50" y="175.8" width="6.00" height="1" fill="#9cdcfe" opacity="0.27"/><rect x="9.00" y="175.8" width="3.00" height="1" fill="#d4d4d4" opacity="0.49"/><rect x="7.50" y="177.3" width="2.25" height="1" fill="#9cdcfe" opacity="0.39"/><rect x="11.25" y="177.3" width="2.25" height="1" fill="#9cdcfe" opacity="0.35"/><rect x="15.00" y="177.3" width="4.50" height="1" fill="#9cdcfe" opacity="0.31"/><rect x="21.00" y="177.3" width="6.00" height="1" fill="#d4d4d4" opacity="0.32"/><rect x="6.00" y="178.8" width="4.50" height="1" fill="#9cdcfe" opacity="0.46"/><rect x="11.00" y="178.8" width="1.50" height="1" fill="#569cd6" opacity="0.43"/><rect x="14.00" y="178.8" width="4.50" height="1" fill="#9cdcfe" opacity="0.39"/><rect x="19.25" y="178.8" width="2.25" height="1" fill="#ce9178" opacity="0.46"/><rect x="22.00" y="178.8" width="6.00" height="1" fill="#569cd6" opacity="0.26"/><rect x="3.00" y="180.3" width="2.25" height="1" fill="#d4d4d4" opacity="0.28"/><rect x="5.75" y="180.3" width="4.50" height="1" fill="#9cdcfe" opacity="0.36"/><rect x="10.75" y="180.3" width="3.00" height="1" fill="#9cdcfe" opacity="0.47"/><rect x="14.50" y="180.3" width="4.50" height="1" fill="#4ec9b0" opacity="0.3"/><rect x="3.00" y="181.8" width="4.50" height="1" fill="#d4d4d4" opacity="0.33"/><rect x="8.25" y="181.8" width="2.25" height="1" fill="#9cdcfe" opacity="0.35"/><rect x="12.00" y="181.8" width="2.25" height="1" fill="#d4d4d4" opacity="0.27"/><rect x="15.00" y="181.8" width="4.50" height="1" fill="#9cdcfe" opacity="0.43"/><rect x="20.00" y="181.8" width="2.25" height="1" fill="#d4d4d4" opacity="0.41"/><rect x="23.75" y="181.8" width="6.00" height="1" fill="#569cd6" opacity="0.43"/><rect x="30.25" y="181.8" width="1.25" height="1" fill="#ce9178" opacity="0.49"/><rect x="4.50" y="183.3" width="2.25" height="1" fill="#4ec9b0" opacity="0.39"/><rect x="8.25" y="183.3" width="6.00" height="1" fill="#ce9178" opacity="0.25"/><rect x="14.75" y="183.3" width="4.50" height="1" fill="#d4d4d4" opacity="0.35"/><rect x="3.00" y="184.8" width="4.50" height="1" fill="#d4d4d4" opacity="0.29"/><rect x="8.00" y="184.8" width="3.00" height="1" fill="#ce9178" opacity="0.34"/><rect x="11.50" y="184.8" width="1.50" height="1" fill="#d4d4d4" opacity="0.47"/><rect x="14.50" y="184.8" width="4.50" height="1" fill="#ce9178" opacity="0.48"/><rect x="19.75" y="184.8" width="6.00" height="1" fill="#569cd6" opacity="0.48"/><rect x="26.25" y="184.8" width="5.25" height="1" fill="#569cd6" opacity="0.28"/><rect x="4.50" y="186.3" width="6.00" height="1" fill="#569cd6" opacity="0.46"/><rect x="11.25" y="186.3" width="4.50" height="1" fill="#9cdcfe" opacity="0.41"/><rect x="16.25" y="186.3" width="2.25" height="1" fill="#d4d4d4" opacity="0.42"/><rect x="20.00" y="186.3" width="6.00" height="1" fill="#d4d4d4" opacity="0.43"/><rect x="26.75" y="186.3" width="3.00" height="1" fill="#4ec9b0" opacity="0.39"/><rect x="31.25" y="186.3" width="0.25" height="1" fill="#d4d4d4" opacity="0.42"/><rect x="1.50" y="187.8" width="6.00" height="1" fill="#9cdcfe" opacity="0.43"/><rect x="8.25" y="187.8" width="2.25" height="1" fill="#9cdcfe" opacity="0.33"/><rect x="4.50" y="189.3" width="1.50" height="1" fill="#d4d4d4" opacity="0.42"/><rect x="6.75" y="189.3" width="2.25" height="1" fill="#569cd6" opacity="0.26"/><rect x="9.50" y="189.3" width="1.50" height="1" fill="#569cd6" opacity="0.38"/><rect x="11.50" y="189.3" width="1.50" height="1" fill="#d4d4d4" opacity="0.42"/><rect x="13.50" y="189.3" width="6.00" height="1" fill="#569cd6" opacity="0.42"/><rect x="21.00" y="189.3" width="1.50" height="1" fill="#d4d4d4" opacity="0.43"/><rect x="23.00" y="189.3" width="2.25" height="1" fill="#d4d4d4" opacity="0.39"/><rect x="7.50" y="190.8" width="3.00" height="1" fill="#9cdcfe" opacity="0.47"/><rect x="11.00" y="190.8" width="1.50" height="1" fill="#9cdcfe" opacity="0.3"/><rect x="13.00" y="190.8" width="6.00" height="1" fill="#d4d4d4" opacity="0.45"/><rect x="19.50" y="190.8" width="2.25" height="1" fill="#9cdcfe" opacity="0.47"/><rect x="23.25" y="190.8" width="6.00" height="1" fill="#ce9178" opacity="0.27"/><rect x="3.00" y="192.3" width="3.00" height="1" fill="#9cdcfe" opacity="0.32"/><rect x="6.75" y="192.3" width="4.50" height="1" fill="#d4d4d4" opacity="0.31"/><rect x="12.75" y="192.3" width="1.50" height="1" fill="#569cd6" opacity="0.34"/><rect x="15.00" y="192.3" width="1.50" height="1" fill="#9cdcfe" opacity="0.5"/><rect x="4.50" y="193.8" width="1.50" height="1" fill="#4ec9b0" opacity="0.3"/><rect x="7.50" y="193.8" width="1.50" height="1" fill="#ce9178" opacity="0.35"/><rect x="9.50" y="193.8" width="3.00" height="1" fill="#9cdcfe" opacity="0.43"/><rect x="13.25" y="193.8" width="1.50" height="1" fill="#ce9178" opacity="0.41"/><rect x="15.25" y="193.8" width="3.00" height="1" fill="#9cdcfe" opacity="0.36"/><rect x="18.75" y="193.8" width="6.00" height="1" fill="#9cdcfe" opacity="0.41"/><rect x="25.50" y="193.8" width="6.00" height="1" fill="#9cdcfe" opacity="0.48"/><rect x="4.50" y="195.3" width="4.50" height="1" fill="#9cdcfe" opacity="0.33"/><rect x="9.75" y="195.3" width="1.50" height="1" fill="#569cd6" opacity="0.4"/><rect x="11.75" y="195.3" width="3.00" height="1" fill="#d4d4d4" opacity="0.41"/><rect x="15.50" y="195.3" width="1.50" height="1" fill="#9cdcfe" opacity="0.27"/><rect x="3.00" y="196.8" width="2.25" height="1" fill="#4ec9b0" opacity="0.37"/><rect x="6.00" y="196.8" width="4.50" height="1" fill="#d4d4d4" opacity="0.35"/><rect x="11.25" y="196.8" width="6.00" height="1" fill="#569cd6" opacity="0.4"/><rect x="7.50" y="198.3" width="4.50" height="1" fill="#ce9178" opacity="0.39"/><rect x="12.50" y="198.3" width="6.00" height="1" fill="#9cdcfe" opacity="0.35"/><rect x="7.50" y="199.8" width="6.00" height="1" fill="#9cdcfe" opacity="0.43"/><rect x="15.00" y="199.8" width="1.50" height="1" fill="#9cdcfe" opacity="0.42"/><rect x="17.00" y="199.8" width="4.50" height="1" fill="#9cdcfe" opacity="0.26"/><rect x="23.00" y="199.8" width="1.50" height="1" fill="#569cd6" opacity="0.4"/><rect x="25.00" y="199.8" width="1.50" height="1" fill="#9cdcfe" opacity="0.43"/><rect x="4.50" y="201.3" width="1.50" height="1" fill="#4ec9b0" opacity="0.49"/><rect x="6.50" y="201.3" width="1.50" height="1" fill="#569cd6" opacity="0.32"/><rect x="8.50" y="201.3" width="2.25" height="1" fill="#9cdcfe" opacity="0.27"/><rect x="12.25" y="201.3" width="6.00" height="1" fill="#569cd6" opacity="0.29"/><rect x="19.75" y="201.3" width="6.00" height="1" fill="#d4d4d4" opacity="0.43"/><rect x="7.50" y="202.8" width="1.50" height="1" fill="#569cd6" opacity="0.42"/><rect x="9.75" y="202.8" width="6.00" height="1" fill="#ce9178" opacity="0.42"/><rect x="17.25" y="202.8" width="1.50" height="1" fill="#9cdcfe" opacity="0.42"/><rect x="4.50" y="204.3" width="3.00" height="1" fill="#d4d4d4" opacity="0.33"/><rect x="8.25" y="204.3" width="3.00" height="1" fill="#9cdcfe" opacity="0.25"/><rect x="11.75" y="204.3" width="1.50" height="1" fill="#d4d4d4" opacity="0.37"/><rect x="14.00" y="204.3" width="2.25" height="1" fill="#ce9178" opacity="0.49"/><rect x="16.75" y="204.3" width="1.50" height="1" fill="#ce9178" opacity="0.36"/><rect x="19.75" y="204.3" width="1.50" height="1" fill="#d4d4d4" opacity="0.25"/><rect x="22.75" y="204.3" width="6.00" height="1" fill="#d4d4d4" opacity="0.5"/><rect x="29.50" y="204.3" width="1.50" height="1" fill="#ce9178" opacity="0.47"/><rect x="4.50" y="207.3" width="4.50" height="1" fill="#4ec9b0" opacity="0.44"/><rect x="9.75" y="207.3" width="4.50" height="1" fill="#4ec9b0" opacity="0.29"/><rect x="15.75" y="207.3" width="6.00" height="1" fill="#ce9178" opacity="0.46"/><rect x="22.25" y="207.3" width="4.50" height="1" fill="#9cdcfe" opacity="0.42"/><rect x="6.00" y="208.8" width="3.00" height="1" fill="#ce9178" opacity="0.33"/><rect x="10.50" y="208.8" width="1.50" height="1" fill="#569cd6" opacity="0.4"/><rect x="12.75" y="208.8" width="1.50" height="1" fill="#ce9178" opacity="0.38"/><rect x="15.75" y="208.8" width="4.50" height="1" fill="#569cd6" opacity="0.3"/><rect x="20.75" y="208.8" width="6.00" height="1" fill="#4ec9b0" opacity="0.3"/><rect x="28.25" y="208.8" width="2.25" height="1" fill="#9cdcfe" opacity="0.29"/><rect x="31.25" y="208.8" width="0.25" height="1" fill="#9cdcfe" opacity="0.31"/><rect x="3.00" y="210.3" width="2.25" height="1" fill="#9cdcfe" opacity="0.46"/><rect x="5.75" y="210.3" width="1.50" height="1" fill="#569cd6" opacity="0.35"/><rect x="8.00" y="210.3" width="2.25" height="1" fill="#9cdcfe" opacity="0.32"/><rect x="11.00" y="210.3" width="2.25" height="1" fill="#d4d4d4" opacity="0.28"/><rect x="14.75" y="210.3" width="6.00" height="1" fill="#9cdcfe" opacity="0.26"/><rect x="21.25" y="210.3" width="4.50" height="1" fill="#569cd6" opacity="0.3"/><rect x="3.00" y="211.8" width="4.50" height="1" fill="#9cdcfe" opacity="0.25"/><rect x="9.00" y="211.8" width="4.50" height="1" fill="#d4d4d4" opacity="0.29"/><rect x="14.25" y="211.8" width="4.50" height="1" fill="#ce9178" opacity="0.4"/><rect x="3.00" y="213.3" width="4.50" height="1" fill="#d4d4d4" opacity="0.5"/><rect x="8.25" y="213.3" width="1.50" height="1" fill="#9cdcfe" opacity="0.29"/><rect x="10.25" y="213.3" width="3.00" height="1" fill="#d4d4d4" opacity="0.31"/><rect x="14.00" y="213.3" width="2.25" height="1" fill="#9cdcfe" opacity="0.36"/><rect x="4.50" y="214.8" width="1.50" height="1" fill="#4ec9b0" opacity="0.47"/><rect x="7.50" y="214.8" width="4.50" height="1" fill="#4ec9b0" opacity="0.47"/><rect x="13.50" y="214.8" width="1.50" height="1" fill="#569cd6" opacity="0.37"/><rect x="15.50" y="214.8" width="3.00" height="1" fill="#9cdcfe" opacity="0.26"/><rect x="7.50" y="216.3" width="3.00" height="1" fill="#4ec9b0" opacity="0.46"/><rect x="11.25" y="216.3" width="3.00" height="1" fill="#569cd6" opacity="0.44"/><rect x="14.75" y="216.3" width="1.50" height="1" fill="#9cdcfe" opacity="0.27"/><rect x="17.75" y="216.3" width="2.25" height="1" fill="#9cdcfe" opacity="0.26"/><rect x="20.75" y="216.3" width="6.00" height="1" fill="#569cd6" opacity="0.34"/><rect x="27.50" y="216.3" width="4.00" height="1" fill="#d4d4d4" opacity="0.31"/><rect x="7.50" y="217.8" width="1.50" height="1" fill="#4ec9b0" opacity="0.32"/><rect x="10.50" y="217.8" width="4.50" height="1" fill="#569cd6" opacity="0.27"/><rect x="4.50" y="219.3" width="6.00" height="1" fill="#9cdcfe" opacity="0.38"/><rect x="11.25" y="219.3" width="4.50" height="1" fill="#9cdcfe" opacity="0.37"/><rect x="16.50" y="219.3" width="4.50" height="1" fill="#d4d4d4" opacity="0.46"/><rect x="21.50" y="219.3" width="2.25" height="1" fill="#d4d4d4" opacity="0.27"/><rect x="3.00" y="222.3" width="3.00" height="1" fill="#9cdcfe" opacity="0.31"/><rect x="6.75" y="222.3" width="6.00" height="1" fill="#d4d4d4" opacity="0.4"/><rect x="14.25" y="222.3" width="1.50" height="1" fill="#ce9178" opacity="0.43"/><rect x="16.25" y="222.3" width="6.00" height="1" fill="#4ec9b0" opacity="0.47"/><rect x="3.00" y="223.8" width="2.25" height="1" fill="#ce9178" opacity="0.34"/><rect x="6.75" y="223.8" width="4.50" height="1" fill="#4ec9b0" opacity="0.36"/><rect x="12.00" y="223.8" width="4.50" height="1" fill="#d4d4d4" opacity="0.44"/><rect x="17.00" y="223.8" width="2.25" height="1" fill="#ce9178" opacity="0.34"/><rect x="20.75" y="223.8" width="3.00" height="1" fill="#9cdcfe" opacity="0.33"/><rect x="24.25" y="223.8" width="1.50" height="1" fill="#9cdcfe" opacity="0.32"/><rect x="27.25" y="223.8" width="2.25" height="1" fill="#ce9178" opacity="0.41"/><rect x="30.00" y="223.8" width="1.50" height="1" fill="#4ec9b0" opacity="0.46"/><rect x="6.00" y="225.3" width="3.00" height="1" fill="#569cd6" opacity="0.31"/><rect x="10.50" y="225.3" width="6.00" height="1" fill="#9cdcfe" opacity="0.4"/><rect x="17.25" y="225.3" width="1.50" height="1" fill="#4ec9b0" opacity="0.44"/><rect x="20.25" y="225.3" width="6.00" height="1" fill="#d4d4d4" opacity="0.48"/><rect x="6.00" y="226.8" width="6.00" height="1" fill="#9cdcfe" opacity="0.49"/><rect x="12.75" y="226.8" width="2.25" height="1" fill="#9cdcfe" opacity="0.27"/><rect x="15.50" y="226.8" width="2.25" height="1" fill="#ce9178" opacity="0.25"/><rect x="19.25" y="226.8" width="6.00" height="1" fill="#4ec9b0" opacity="0.29"/><rect x="25.75" y="226.8" width="2.25" height="1" fill="#9cdcfe" opacity="0.26"/><rect x="29.50" y="226.8" width="2.00" height="1" fill="#9cdcfe" opacity="0.36"/><rect x="7.50" y="228.3" width="3.00" height="1" fill="#9cdcfe" opacity="0.35"/><rect x="12.00" y="228.3" width="1.50" height="1" fill="#ce9178" opacity="0.33"/><rect x="14.00" y="228.3" width="3.00" height="1" fill="#9cdcfe" opacity="0.38"/><rect x="17.50" y="228.3" width="4.50" height="1" fill="#d4d4d4" opacity="0.36"/><rect x="22.50" y="228.3" width="6.00" height="1" fill="#4ec9b0" opacity="0.26"/><rect x="30.00" y="228.3" width="1.50" height="1" fill="#ce9178" opacity="0.48"/><rect x="1.50" y="229.8" width="2.25" height="1" fill="#4ec9b0" opacity="0.32"/><rect x="4.25" y="229.8" width="2.25" height="1" fill="#9cdcfe" opacity="0.26"/><rect x="7.00" y="229.8" width="3.00" height="1" fill="#569cd6" opacity="0.41"/><rect x="10.75" y="229.8" width="6.00" height="1" fill="#d4d4d4" opacity="0.26"/><rect x="17.50" y="229.8" width="4.50" height="1" fill="#ce9178" opacity="0.42"/><rect x="23.50" y="229.8" width="2.25" height="1" fill="#d4d4d4" opacity="0.27"/><rect x="26.50" y="229.8" width="1.50" height="1" fill="#9cdcfe" opacity="0.43"/><rect x="28.75" y="229.8" width="1.50" height="1" fill="#4ec9b0" opacity="0.26"/><rect x="30.75" y="229.8" width="0.75" height="1" fill="#d4d4d4" opacity="0.37"/><rect x="1.50" y="231.3" width="1.50" height="1" fill="#d4d4d4" opacity="0.31"/><rect x="3.75" y="231.3" width="3.00" height="1" fill="#4ec9b0" opacity="0.48"/><rect x="7.50" y="231.3" width="6.00" height="1" fill="#d4d4d4" opacity="0.41"/><rect x="14.00" y="231.3" width="1.50" height="1" fill="#9cdcfe" opacity="0.46"/><rect x="16.25" y="231.3" width="1.50" height="1" fill="#9cdcfe" opacity="0.42"/><rect x="19.25" y="231.3" width="1.50" height="1" fill="#d4d4d4" opacity="0.38"/><rect x="21.50" y="231.3" width="2.25" height="1" fill="#4ec9b0" opacity="0.25"/><rect x="24.25" y="231.3" width="2.25" height="1" fill="#9cdcfe" opacity="0.34"/><rect x="1.50" y="234.3" width="3.00" height="1" fill="#d4d4d4" opacity="0.4"/><rect x="6.00" y="234.3" width="3.00" height="1" fill="#569cd6" opacity="0.4"/><rect x="9.50" y="234.3" width="2.25" height="1" fill="#d4d4d4" opacity="0.27"/><rect x="12.25" y="234.3" width="1.50" height="1" fill="#9cdcfe" opacity="0.39"/><rect x="14.25" y="234.3" width="1.50" height="1" fill="#569cd6" opacity="0.32"/><rect x="16.25" y="234.3" width="3.00" height="1" fill="#d4d4d4" opacity="0.27"/><rect x="19.75" y="234.3" width="6.00" height="1" fill="#9cdcfe" opacity="0.28"/><rect x="4.50" y="235.8" width="3.00" height="1" fill="#ce9178" opacity="0.36"/><rect x="8.25" y="235.8" width="4.50" height="1" fill="#9cdcfe" opacity="0.47"/><rect x="13.50" y="235.8" width="4.50" height="1" fill="#ce9178" opacity="0.31"/><rect x="18.50" y="235.8" width="4.50" height="1" fill="#9cdcfe" opacity="0.3"/><rect x="1.50" y="237.3" width="2.25" height="1" fill="#d4d4d4" opacity="0.45"/><rect x="4.50" y="237.3" width="1.50" height="1" fill="#d4d4d4" opacity="0.41"/><rect x="7.50" y="237.3" width="3.00" height="1" fill="#569cd6" opacity="0.48"/><rect x="12.00" y="237.3" width="3.00" height="1" fill="#569cd6" opacity="0.29"/><rect x="15.75" y="237.3" width="4.50" height="1" fill="#d4d4d4" opacity="0.39"/><rect x="1.50" y="238.8" width="2.25" height="1" fill="#d4d4d4" opacity="0.3"/><rect x="4.25" y="238.8" width="1.50" height="1" fill="#d4d4d4" opacity="0.4"/><rect x="6.25" y="238.8" width="3.00" height="1" fill="#d4d4d4" opacity="0.32"/><rect x="10.00" y="238.8" width="4.50" height="1" fill="#d4d4d4" opacity="0.36"/><rect x="16.00" y="238.8" width="1.50" height="1" fill="#569cd6" opacity="0.3"/><rect x="18.25" y="238.8" width="2.25" height="1" fill="#9cdcfe" opacity="0.36"/><rect x="21.25" y="238.8" width="2.25" height="1" fill="#d4d4d4" opacity="0.34"/><rect x="4.50" y="240.3" width="4.50" height="1" fill="#9cdcfe" opacity="0.35"/><rect x="9.50" y="240.3" width="2.25" height="1" fill="#9cdcfe" opacity="0.33"/><rect x="12.50" y="240.3" width="4.50" height="1" fill="#4ec9b0" opacity="0.45"/><rect x="18.50" y="240.3" width="4.50" height="1" fill="#4ec9b0" opacity="0.27"/><rect x="24.50" y="240.3" width="3.00" height="1" fill="#d4d4d4" opacity="0.45"/><rect x="1.50" y="241.8" width="2.25" height="1" fill="#9cdcfe" opacity="0.37"/><rect x="4.25" y="241.8" width="3.00" height="1" fill="#d4d4d4" opacity="0.45"/><rect x="8.00" y="241.8" width="6.00" height="1" fill="#d4d4d4" opacity="0.44"/><rect x="14.50" y="241.8" width="6.00" height="1" fill="#ce9178" opacity="0.3"/><rect x="21.00" y="241.8" width="3.00" height="1" fill="#9cdcfe" opacity="0.43"/><rect x="25.50" y="241.8" width="2.25" height="1" fill="#9cdcfe" opacity="0.3"/><rect x="3.00" y="244.8" width="4.50" height="1" fill="#9cdcfe" opacity="0.46"/><rect x="9.00" y="244.8" width="1.50" height="1" fill="#9cdcfe" opacity="0.26"/></svg><div style="position:absolute;left:556px;top:87px;width:1px;height:289px;background:#151515;"></div><div style="position:absolute;left:588.5px;top:87px;width:1px;height:289px;background:#2a2a2a;"></div><svg style="left:904px;top:87px" width="26.5" height="289" viewBox="0 0 26.5 289"><rect x="0" y="0" width="26.5" height="24" fill="#ffffff" opacity="0.06"/><rect x="0.00" y="1.0" width="1.50" height="1" fill="#d4d4d4" opacity="0.5"/><rect x="1.50" y="2.5" width="7.50" height="1" fill="#9cdcfe" opacity="0.35"/><rect x="9.75" y="2.5" width="1.50" height="1" fill="#d4d4d4" opacity="0.3"/><rect x="12.00" y="2.5" width="4.50" height="1" fill="#ce9178" opacity="0.44"/><rect x="17.25" y="2.5" width="0.75" height="1" fill="#ce9178" opacity="0.38"/><rect x="1.50" y="4.0" width="7.50" height="1" fill="#9cdcfe" opacity="0.31"/><rect x="9.75" y="4.0" width="1.50" height="1" fill="#d4d4d4" opacity="0.3"/><rect x="12.00" y="4.0" width="2.25" height="1" fill="#ce9178" opacity="0.38"/><rect x="15.00" y="4.0" width="2.25" height="1" fill="#ce9178" opacity="0.27"/><rect x="18.00" y="4.0" width="1.50" height="1" fill="#ce9178" opacity="0.42"/><rect x="1.50" y="5.5" width="6.00" height="1" fill="#9cdcfe" opacity="0.41"/><rect x="8.25" y="5.5" width="1.50" height="1" fill="#d4d4d4" opacity="0.3"/><rect x="10.50" y="5.5" width="2.25" height="1" fill="#ce9178" opacity="0.25"/><rect x="13.50" y="5.5" width="2.25" height="1" fill="#ce9178" opacity="0.33"/><rect x="16.50" y="5.5" width="2.25" height="1" fill="#ce9178" opacity="0.43"/><rect x="19.50" y="5.5" width="1.00" height="1" fill="#ce9178" opacity="0.28"/><rect x="1.50" y="7.0" width="3.00" height="1" fill="#9cdcfe" opacity="0.33"/><rect x="5.25" y="7.0" width="1.50" height="1" fill="#d4d4d4" opacity="0.3"/><rect x="7.50" y="7.0" width="3.00" height="1" fill="#ce9178" opacity="0.28"/><rect x="11.25" y="7.0" width="2.25" height="1" fill="#ce9178" opacity="0.44"/><rect x="14.25" y="7.0" width="2.25" height="1" fill="#ce9178" opacity="0.29"/><rect x="17.25" y="7.0" width="0.25" height="1" fill="#ce9178" opacity="0.44"/><rect x="1.50" y="8.5" width="4.50" height="1" fill="#9cdcfe" opacity="0.47"/><rect x="6.75" y="8.5" width="1.50" height="1" fill="#d4d4d4" opacity="0.3"/><rect x="9.00" y="8.5" width="3.00" height="1" fill="#ce9178" opacity="0.44"/><rect x="12.75" y="8.5" width="2.25" height="1" fill="#ce9178" opacity="0.43"/><rect x="1.50" y="10.0" width="9.00" height="1" fill="#9cdcfe" opacity="0.34"/><rect x="11.25" y="10.0" width="1.50" height="1" fill="#d4d4d4" opacity="0.3"/><rect x="13.50" y="10.0" width="2.25" height="1" fill="#ce9178" opacity="0.44"/><rect x="16.50" y="10.0" width="3.00" height="1" fill="#ce9178" opacity="0.31"/><rect x="20.25" y="10.0" width="3.00" height="1" fill="#ce9178" opacity="0.33"/><rect x="24.00" y="10.0" width="2.25" height="1" fill="#ce9178" opacity="0.3"/><rect x="1.50" y="11.5" width="7.50" height="1" fill="#9cdcfe" opacity="0.42"/><rect x="9.75" y="11.5" width="1.50" height="1" fill="#d4d4d4" opacity="0.3"/><rect x="12.00" y="11.5" width="4.50" height="1" fill="#ce9178" opacity="0.39"/><rect x="17.25" y="11.5" width="2.25" height="1" fill="#ce9178" opacity="0.31"/><rect x="20.25" y="11.5" width="1.75" height="1" fill="#ce9178" opacity="0.35"/><rect x="1.50" y="13.0" width="6.00" height="1" fill="#9cdcfe" opacity="0.34"/><rect x="8.25" y="13.0" width="1.50" height="1" fill="#d4d4d4" opacity="0.3"/><rect x="10.50" y="13.0" width="4.50" height="1" fill="#ce9178" opacity="0.29"/><rect x="15.75" y="13.0" width="2.25" height="1" fill="#ce9178" opacity="0.45"/><rect x="1.50" y="14.5" width="3.00" height="1" fill="#9cdcfe" opacity="0.49"/><rect x="5.25" y="14.5" width="1.50" height="1" fill="#d4d4d4" opacity="0.3"/><rect x="7.50" y="14.5" width="3.00" height="1" fill="#ce9178" opacity="0.25"/><rect x="11.25" y="14.5" width="2.25" height="1" fill="#ce9178" opacity="0.32"/><rect x="1.50" y="16.0" width="7.50" height="1" fill="#9cdcfe" opacity="0.47"/><rect x="9.75" y="16.0" width="1.50" height="1" fill="#d4d4d4" opacity="0.3"/><rect x="12.00" y="16.0" width="2.25" height="1" fill="#ce9178" opacity="0.39"/><rect x="15.00" y="16.0" width="4.50" height="1" fill="#ce9178" opacity="0.44"/><rect x="1.50" y="17.5" width="4.50" height="1" fill="#9cdcfe" opacity="0.32"/><rect x="6.75" y="17.5" width="1.50" height="1" fill="#d4d4d4" opacity="0.3"/><rect x="9.00" y="17.5" width="3.00" height="1" fill="#ce9178" opacity="0.32"/><rect x="12.75" y="17.5" width="0.75" height="1" fill="#ce9178" opacity="0.43"/><rect x="3.00" y="19.0" width="6.00" height="1" fill="#9cdcfe" opacity="0.32"/><rect x="9.75" y="19.0" width="1.50" height="1" fill="#d4d4d4" opacity="0.3"/><rect x="12.00" y="19.0" width="3.00" height="1" fill="#ce9178" opacity="0.42"/><rect x="15.75" y="19.0" width="2.25" height="1" fill="#ce9178" opacity="0.34"/><rect x="18.75" y="19.0" width="2.25" height="1" fill="#ce9178" opacity="0.29"/><rect x="21.75" y="19.0" width="4.25" height="1" fill="#ce9178" opacity="0.37"/><rect x="3.00" y="20.5" width="6.00" height="1" fill="#9cdcfe" opacity="0.36"/><rect x="9.75" y="20.5" width="1.50" height="1" fill="#d4d4d4" opacity="0.3"/><rect x="12.00" y="20.5" width="4.50" height="1" fill="#ce9178" opacity="0.27"/><rect x="17.25" y="20.5" width="4.50" height="1" fill="#ce9178" opacity="0.31"/><rect x="22.50" y="20.5" width="2.25" height="1" fill="#ce9178" opacity="0.41"/><rect x="25.50" y="20.5" width="0.50" height="1" fill="#ce9178" opacity="0.28"/><rect x="3.00" y="22.0" width="6.00" height="1" fill="#9cdcfe" opacity="0.33"/><rect x="9.75" y="22.0" width="1.50" height="1" fill="#d4d4d4" opacity="0.3"/><rect x="12.00" y="22.0" width="2.25" height="1" fill="#ce9178" opacity="0.45"/><rect x="1.50" y="23.5" width="6.00" height="1" fill="#9cdcfe" opacity="0.31"/><rect x="8.25" y="23.5" width="1.50" height="1" fill="#d4d4d4" opacity="0.3"/><rect x="10.50" y="23.5" width="4.50" height="1" fill="#ce9178" opacity="0.32"/><rect x="15.75" y="23.5" width="3.00" height="1" fill="#ce9178" opacity="0.34"/><rect x="19.50" y="23.5" width="3.00" height="1" fill="#ce9178" opacity="0.28"/><rect x="23.25" y="23.5" width="1.25" height="1" fill="#ce9178" opacity="0.26"/><rect x="4.50" y="25.0" width="6.00" height="1" fill="#9cdcfe" opacity="0.47"/><rect x="11.25" y="25.0" width="1.50" height="1" fill="#d4d4d4" opacity="0.3"/><rect x="13.50" y="25.0" width="4.50" height="1" fill="#ce9178" opacity="0.36"/><rect x="3.00" y="26.5" width="9.00" height="1" fill="#9cdcfe" opacity="0.48"/><rect x="12.75" y="26.5" width="1.50" height="1" fill="#d4d4d4" opacity="0.3"/><rect x="15.00" y="26.5" width="2.25" height="1" fill="#ce9178" opacity="0.28"/><rect x="18.00" y="26.5" width="3.00" height="1" fill="#ce9178" opacity="0.28"/><rect x="21.75" y="26.5" width="0.75" height="1" fill="#ce9178" opacity="0.31"/><rect x="4.50" y="28.0" width="7.50" height="1" fill="#9cdcfe" opacity="0.47"/><rect x="12.75" y="28.0" width="1.50" height="1" fill="#d4d4d4" opacity="0.3"/><rect x="15.00" y="28.0" width="3.00" height="1" fill="#ce9178" opacity="0.44"/><rect x="18.75" y="28.0" width="4.50" height="1" fill="#ce9178" opacity="0.4"/><rect x="24.00" y="28.0" width="1.00" height="1" fill="#ce9178" opacity="0.3"/><rect x="4.50" y="29.5" width="6.00" height="1" fill="#9cdcfe" opacity="0.48"/><rect x="11.25" y="29.5" width="1.50" height="1" fill="#d4d4d4" opacity="0.3"/><rect x="13.50" y="29.5" width="2.25" height="1" fill="#ce9178" opacity="0.41"/><rect x="1.50" y="31.0" width="4.50" height="1" fill="#9cdcfe" opacity="0.43"/><rect x="6.75" y="31.0" width="1.50" height="1" fill="#d4d4d4" opacity="0.3"/><rect x="9.00" y="31.0" width="3.00" height="1" fill="#ce9178" opacity="0.29"/><rect x="12.75" y="31.0" width="3.00" height="1" fill="#ce9178" opacity="0.3"/><rect x="1.50" y="32.5" width="7.50" height="1" fill="#9cdcfe" opacity="0.37"/><rect x="9.75" y="32.5" width="1.50" height="1" fill="#d4d4d4" opacity="0.3"/><rect x="12.00" y="32.5" width="4.50" height="1" fill="#ce9178" opacity="0.37"/><rect x="17.25" y="32.5" width="0.75" height="1" fill="#ce9178" opacity="0.4"/><rect x="3.00" y="34.0" width="7.50" height="1" fill="#9cdcfe" opacity="0.44"/><rect x="11.25" y="34.0" width="1.50" height="1" fill="#d4d4d4" opacity="0.3"/><rect x="13.50" y="34.0" width="3.00" height="1" fill="#ce9178" opacity="0.3"/><rect x="17.25" y="34.0" width="2.25" height="1" fill="#ce9178" opacity="0.39"/><rect x="3.00" y="35.5" width="9.00" height="1" fill="#9cdcfe" opacity="0.34"/><rect x="12.75" y="35.5" width="1.50" height="1" fill="#d4d4d4" opacity="0.3"/><rect x="15.00" y="35.5" width="2.25" height="1" fill="#ce9178" opacity="0.36"/><rect x="3.00" y="37.0" width="6.00" height="1" fill="#9cdcfe" opacity="0.43"/><rect x="9.75" y="37.0" width="1.50" height="1" fill="#d4d4d4" opacity="0.3"/><rect x="12.00" y="37.0" width="3.00" height="1" fill="#ce9178" opacity="0.41"/><rect x="15.75" y="37.0" width="3.75" height="1" fill="#ce9178" opacity="0.38"/><rect x="3.00" y="38.5" width="6.00" height="1" fill="#9cdcfe" opacity="0.35"/><rect x="9.75" y="38.5" width="1.50" height="1" fill="#d4d4d4" opacity="0.3"/><rect x="12.00" y="38.5" width="4.50" height="1" fill="#ce9178" opacity="0.44"/><rect x="17.25" y="38.5" width="0.75" height="1" fill="#ce9178" opacity="0.32"/><rect x="3.00" y="40.0" width="9.00" height="1" fill="#9cdcfe" opacity="0.39"/><rect x="12.75" y="40.0" width="1.50" height="1" fill="#d4d4d4" opacity="0.3"/><rect x="15.00" y="40.0" width="3.00" height="1" fill="#ce9178" opacity="0.35"/><rect x="18.75" y="40.0" width="2.25" height="1" fill="#ce9178" opacity="0.45"/><rect x="3.00" y="41.5" width="6.00" height="1" fill="#9cdcfe" opacity="0.49"/><rect x="9.75" y="41.5" width="1.50" height="1" fill="#d4d4d4" opacity="0.3"/><rect x="12.00" y="41.5" width="3.00" height="1" fill="#ce9178" opacity="0.39"/><rect x="15.75" y="41.5" width="3.75" height="1" fill="#ce9178" opacity="0.38"/><rect x="4.50" y="43.0" width="4.50" height="1" fill="#9cdcfe" opacity="0.42"/><rect x="9.75" y="43.0" width="1.50" height="1" fill="#d4d4d4" opacity="0.3"/><rect x="12.00" y="43.0" width="4.50" height="1" fill="#ce9178" opacity="0.38"/><rect x="17.25" y="43.0" width="3.00" height="1" fill="#ce9178" opacity="0.31"/><rect x="21.00" y="43.0" width="1.00" height="1" fill="#ce9178" opacity="0.4"/><rect x="3.00" y="44.5" width="9.00" height="1" fill="#9cdcfe" opacity="0.5"/><rect x="12.75" y="44.5" width="1.50" height="1" fill="#d4d4d4" opacity="0.3"/><rect x="15.00" y="44.5" width="2.25" height="1" fill="#ce9178" opacity="0.37"/><rect x="18.00" y="44.5" width="1.50" height="1" fill="#ce9178" opacity="0.38"/><rect x="3.00" y="46.0" width="9.00" height="1" fill="#9cdcfe" opacity="0.34"/><rect x="12.75" y="46.0" width="1.50" height="1" fill="#d4d4d4" opacity="0.3"/><rect x="15.00" y="46.0" width="2.25" height="1" fill="#ce9178" opacity="0.45"/><rect x="18.00" y="46.0" width="2.25" height="1" fill="#ce9178" opacity="0.28"/><rect x="21.00" y="46.0" width="2.25" height="1" fill="#ce9178" opacity="0.27"/><rect x="24.00" y="46.0" width="2.25" height="1" fill="#ce9178" opacity="0.35"/><rect x="4.50" y="47.5" width="6.00" height="1" fill="#9cdcfe" opacity="0.38"/><rect x="11.25" y="47.5" width="1.50" height="1" fill="#d4d4d4" opacity="0.3"/><rect x="13.50" y="47.5" width="2.25" height="1" fill="#ce9178" opacity="0.37"/><rect x="16.50" y="47.5" width="2.25" height="1" fill="#ce9178" opacity="0.39"/><rect x="19.50" y="47.5" width="3.00" height="1" fill="#ce9178" opacity="0.25"/><rect x="23.25" y="47.5" width="0.25" height="1" fill="#ce9178" opacity="0.44"/><rect x="4.50" y="49.0" width="3.00" height="1" fill="#9cdcfe" opacity="0.44"/><rect x="8.25" y="49.0" width="1.50" height="1" fill="#d4d4d4" opacity="0.3"/><rect x="10.50" y="49.0" width="3.00" height="1" fill="#ce9178" opacity="0.44"/><rect x="14.25" y="49.0" width="4.50" height="1" fill="#ce9178" opacity="0.37"/><rect x="19.50" y="49.0" width="1.00" height="1" fill="#ce9178" opacity="0.31"/><rect x="1.50" y="50.5" width="6.00" height="1" fill="#9cdcfe" opacity="0.49"/><rect x="8.25" y="50.5" width="1.50" height="1" fill="#d4d4d4" opacity="0.3"/><rect x="10.50" y="50.5" width="3.00" height="1" fill="#ce9178" opacity="0.41"/><rect x="14.25" y="50.5" width="2.25" height="1" fill="#ce9178" opacity="0.33"/><rect x="1.50" y="52.0" width="9.00" height="1" fill="#9cdcfe" opacity="0.41"/><rect x="11.25" y="52.0" width="1.50" height="1" fill="#d4d4d4" opacity="0.3"/><rect x="13.50" y="52.0" width="2.25" height="1" fill="#ce9178" opacity="0.28"/><rect x="16.50" y="52.0" width="3.00" height="1" fill="#ce9178" opacity="0.36"/><rect x="20.25" y="52.0" width="0.75" height="1" fill="#ce9178" opacity="0.44"/><rect x="1.50" y="53.5" width="3.00" height="1" fill="#9cdcfe" opacity="0.37"/><rect x="5.25" y="53.5" width="1.50" height="1" fill="#d4d4d4" opacity="0.3"/><rect x="7.50" y="53.5" width="2.25" height="1" fill="#ce9178" opacity="0.33"/><rect x="10.50" y="53.5" width="3.00" height="1" fill="#ce9178" opacity="0.36"/><rect x="14.25" y="53.5" width="4.50" height="1" fill="#ce9178" opacity="0.36"/><rect x="19.50" y="53.5" width="2.00" height="1" fill="#ce9178" opacity="0.38"/><rect x="1.50" y="55.0" width="6.00" height="1" fill="#9cdcfe" opacity="0.39"/><rect x="8.25" y="55.0" width="1.50" height="1" fill="#d4d4d4" opacity="0.3"/><rect x="10.50" y="55.0" width="3.00" height="1" fill="#ce9178" opacity="0.31"/><rect x="14.25" y="55.0" width="0.75" height="1" fill="#ce9178" opacity="0.33"/><rect x="3.00" y="56.5" width="7.50" height="1" fill="#9cdcfe" opacity="0.42"/><rect x="11.25" y="56.5" width="1.50" height="1" fill="#d4d4d4" opacity="0.3"/><rect x="13.50" y="56.5" width="3.00" height="1" fill="#ce9178" opacity="0.35"/><rect x="17.25" y="56.5" width="3.00" height="1" fill="#ce9178" opacity="0.25"/><rect x="21.00" y="56.5" width="3.00" height="1" fill="#ce9178" opacity="0.35"/><rect x="24.75" y="56.5" width="1.75" height="1" fill="#ce9178" opacity="0.28"/><rect x="3.00" y="58.0" width="3.00" height="1" fill="#9cdcfe" opacity="0.43"/><rect x="6.75" y="58.0" width="1.50" height="1" fill="#d4d4d4" opacity="0.3"/><rect x="9.00" y="58.0" width="2.25" height="1" fill="#ce9178" opacity="0.31"/><rect x="12.00" y="58.0" width="2.25" height="1" fill="#ce9178" opacity="0.42"/><rect x="15.00" y="58.0" width="1.50" height="1" fill="#ce9178" opacity="0.35"/><rect x="1.50" y="59.5" width="6.00" height="1" fill="#9cdcfe" opacity="0.35"/><rect x="8.25" y="59.5" width="1.50" height="1" fill="#d4d4d4" opacity="0.3"/><rect x="10.50" y="59.5" width="2.25" height="1" fill="#ce9178" opacity="0.3"/><rect x="13.50" y="59.5" width="3.00" height="1" fill="#ce9178" opacity="0.42"/><rect x="17.25" y="59.5" width="0.75" height="1" fill="#ce9178" opacity="0.45"/><rect x="3.00" y="61.0" width="6.00" height="1" fill="#9cdcfe" opacity="0.42"/><rect x="9.75" y="61.0" width="1.50" height="1" fill="#d4d4d4" opacity="0.3"/><rect x="12.00" y="61.0" width="4.50" height="1" fill="#ce9178" opacity="0.38"/><rect x="17.25" y="61.0" width="2.25" height="1" fill="#ce9178" opacity="0.43"/><rect x="3.00" y="62.5" width="3.00" height="1" fill="#9cdcfe" opacity="0.45"/><rect x="6.75" y="62.5" width="1.50" height="1" fill="#d4d4d4" opacity="0.3"/><rect x="9.00" y="62.5" width="3.00" height="1" fill="#ce9178" opacity="0.36"/><rect x="12.75" y="62.5" width="2.25" height="1" fill="#ce9178" opacity="0.37"/><rect x="1.50" y="64.0" width="3.00" height="1" fill="#9cdcfe" opacity="0.39"/><rect x="5.25" y="64.0" width="1.50" height="1" fill="#d4d4d4" opacity="0.3"/><rect x="7.50" y="64.0" width="4.50" height="1" fill="#ce9178" opacity="0.4"/><rect x="12.75" y="64.0" width="0.75" height="1" fill="#ce9178" opacity="0.28"/><rect x="3.00" y="65.5" width="6.00" height="1" fill="#9cdcfe" opacity="0.41"/><rect x="9.75" y="65.5" width="1.50" height="1" fill="#d4d4d4" opacity="0.3"/><rect x="12.00" y="65.5" width="2.25" height="1" fill="#ce9178" opacity="0.43"/><rect x="15.00" y="65.5" width="4.50" height="1" fill="#ce9178" opacity="0.29"/><rect x="20.25" y="65.5" width="3.00" height="1" fill="#ce9178" opacity="0.41"/><rect x="24.00" y="65.5" width="2.00" height="1" fill="#ce9178" opacity="0.37"/><rect x="4.50" y="67.0" width="6.00" height="1" fill="#9cdcfe" opacity="0.4"/><rect x="11.25" y="67.0" width="1.50" height="1" fill="#d4d4d4" opacity="0.3"/><rect x="13.50" y="67.0" width="4.50" height="1" fill="#ce9178" opacity="0.29"/><rect x="18.75" y="67.0" width="3.00" height="1" fill="#ce9178" opacity="0.34"/><rect x="22.50" y="67.0" width="2.25" height="1" fill="#ce9178" opacity="0.31"/><rect x="25.50" y="67.0" width="1.00" height="1" fill="#ce9178" opacity="0.39"/><rect x="4.50" y="68.5" width="7.50" height="1" fill="#9cdcfe" opacity="0.36"/><rect x="12.75" y="68.5" width="1.50" height="1" fill="#d4d4d4" opacity="0.3"/><rect x="15.00" y="68.5" width="3.00" height="1" fill="#ce9178" opacity="0.28"/><rect x="18.75" y="68.5" width="3.00" height="1" fill="#ce9178" opacity="0.39"/><rect x="4.50" y="70.0" width="6.00" height="1" fill="#9cdcfe" opacity="0.41"/><rect x="11.25" y="70.0" width="1.50" height="1" fill="#d4d4d4" opacity="0.3"/><rect x="13.50" y="70.0" width="4.50" height="1" fill="#ce9178" opacity="0.36"/><rect x="18.75" y="70.0" width="2.25" height="1" fill="#ce9178" opacity="0.26"/><rect x="3.00" y="71.5" width="6.00" height="1" fill="#9cdcfe" opacity="0.46"/><rect x="9.75" y="71.5" width="1.50" height="1" fill="#d4d4d4" opacity="0.3"/><rect x="12.00" y="71.5" width="2.25" height="1" fill="#ce9178" opacity="0.44"/><rect x="3.00" y="73.0" width="9.00" height="1" fill="#9cdcfe" opacity="0.39"/><rect x="12.75" y="73.0" width="1.50" height="1" fill="#d4d4d4" opacity="0.3"/><rect x="15.00" y="73.0" width="2.25" height="1" fill="#ce9178" opacity="0.39"/><rect x="3.00" y="74.5" width="3.00" height="1" fill="#9cdcfe" opacity="0.47"/><rect x="6.75" y="74.5" width="1.50" height="1" fill="#d4d4d4" opacity="0.3"/><rect x="9.00" y="74.5" width="4.50" height="1" fill="#ce9178" opacity="0.38"/><rect x="3.00" y="76.0" width="9.00" height="1" fill="#9cdcfe" opacity="0.48"/><rect x="12.75" y="76.0" width="1.50" height="1" fill="#d4d4d4" opacity="0.3"/><rect x="15.00" y="76.0" width="4.50" height="1" fill="#ce9178" opacity="0.43"/><rect x="20.25" y="76.0" width="0.75" height="1" fill="#ce9178" opacity="0.29"/><rect x="3.00" y="77.5" width="6.00" height="1" fill="#9cdcfe" opacity="0.46"/><rect x="9.75" y="77.5" width="1.50" height="1" fill="#d4d4d4" opacity="0.3"/><rect x="12.00" y="77.5" width="2.25" height="1" fill="#ce9178" opacity="0.29"/><rect x="1.50" y="79.0" width="3.00" height="1" fill="#9cdcfe" opacity="0.43"/><rect x="5.25" y="79.0" width="1.50" height="1" fill="#d4d4d4" opacity="0.3"/><rect x="7.50" y="79.0" width="2.25" height="1" fill="#ce9178" opacity="0.31"/><rect x="10.50" y="79.0" width="4.50" height="1" fill="#ce9178" opacity="0.37"/><rect x="15.75" y="79.0" width="4.50" height="1" fill="#ce9178" opacity="0.33"/><rect x="21.00" y="79.0" width="0.50" height="1" fill="#ce9178" opacity="0.28"/><rect x="4.50" y="80.5" width="3.00" height="1" fill="#9cdcfe" opacity="0.36"/><rect x="8.25" y="80.5" width="1.50" height="1" fill="#d4d4d4" opacity="0.3"/><rect x="10.50" y="80.5" width="3.00" height="1" fill="#ce9178" opacity="0.35"/><rect x="14.25" y="80.5" width="4.50" height="1" fill="#ce9178" opacity="0.32"/><rect x="19.50" y="80.5" width="1.00" height="1" fill="#ce9178" opacity="0.28"/><rect x="3.00" y="82.0" width="4.50" height="1" fill="#9cdcfe" opacity="0.41"/><rect x="8.25" y="82.0" width="1.50" height="1" fill="#d4d4d4" opacity="0.3"/><rect x="10.50" y="82.0" width="4.50" height="1" fill="#ce9178" opacity="0.31"/><rect x="15.75" y="82.0" width="4.50" height="1" fill="#ce9178" opacity="0.36"/><rect x="21.00" y="82.0" width="2.25" height="1" fill="#ce9178" opacity="0.3"/><rect x="24.00" y="82.0" width="0.50" height="1" fill="#ce9178" opacity="0.3"/><rect x="3.00" y="83.5" width="7.50" height="1" fill="#9cdcfe" opacity="0.5"/><rect x="11.25" y="83.5" width="1.50" height="1" fill="#d4d4d4" opacity="0.3"/><rect x="13.50" y="83.5" width="3.00" height="1" fill="#ce9178" opacity="0.34"/><rect x="17.25" y="83.5" width="0.75" height="1" fill="#ce9178" opacity="0.29"/><rect x="3.00" y="85.0" width="9.00" height="1" fill="#9cdcfe" opacity="0.37"/><rect x="12.75" y="85.0" width="1.50" height="1" fill="#d4d4d4" opacity="0.3"/><rect x="15.00" y="85.0" width="4.50" height="1" fill="#ce9178" opacity="0.26"/><rect x="20.25" y="85.0" width="2.25" height="1" fill="#ce9178" opacity="0.35"/><rect x="23.25" y="85.0" width="1.75" height="1" fill="#ce9178" opacity="0.3"/><rect x="4.50" y="86.5" width="6.00" height="1" fill="#9cdcfe" opacity="0.49"/><rect x="11.25" y="86.5" width="1.50" height="1" fill="#d4d4d4" opacity="0.3"/><rect x="13.50" y="86.5" width="2.25" height="1" fill="#ce9178" opacity="0.26"/><rect x="4.50" y="88.0" width="3.00" height="1" fill="#9cdcfe" opacity="0.47"/><rect x="8.25" y="88.0" width="1.50" height="1" fill="#d4d4d4" opacity="0.3"/><rect x="10.50" y="88.0" width="4.50" height="1" fill="#ce9178" opacity="0.41"/><rect x="15.75" y="88.0" width="2.25" height="1" fill="#ce9178" opacity="0.27"/><rect x="4.50" y="89.5" width="4.50" height="1" fill="#9cdcfe" opacity="0.33"/><rect x="9.75" y="89.5" width="1.50" height="1" fill="#d4d4d4" opacity="0.3"/><rect x="12.00" y="89.5" width="3.00" height="1" fill="#ce9178" opacity="0.32"/><rect x="15.75" y="89.5" width="2.25" height="1" fill="#ce9178" opacity="0.31"/><rect x="18.75" y="89.5" width="3.25" height="1" fill="#ce9178" opacity="0.39"/><rect x="4.50" y="91.0" width="6.00" height="1" fill="#9cdcfe" opacity="0.33"/><rect x="11.25" y="91.0" width="1.50" height="1" fill="#d4d4d4" opacity="0.3"/><rect x="13.50" y="91.0" width="4.50" height="1" fill="#ce9178" opacity="0.31"/><rect x="18.75" y="91.0" width="0.75" height="1" fill="#ce9178" opacity="0.34"/><rect x="3.00" y="92.5" width="7.50" height="1" fill="#9cdcfe" opacity="0.31"/><rect x="11.25" y="92.5" width="1.50" height="1" fill="#d4d4d4" opacity="0.3"/><rect x="13.50" y="92.5" width="2.25" height="1" fill="#ce9178" opacity="0.4"/><rect x="16.50" y="92.5" width="3.00" height="1" fill="#ce9178" opacity="0.26"/><rect x="20.25" y="92.5" width="2.25" height="1" fill="#ce9178" opacity="0.26"/><rect x="23.25" y="92.5" width="0.25" height="1" fill="#ce9178" opacity="0.29"/><rect x="4.50" y="94.0" width="6.00" height="1" fill="#9cdcfe" opacity="0.43"/><rect x="11.25" y="94.0" width="1.50" height="1" fill="#d4d4d4" opacity="0.3"/><rect x="13.50" y="94.0" width="2.25" height="1" fill="#ce9178" opacity="0.34"/><rect x="16.50" y="94.0" width="3.00" height="1" fill="#ce9178" opacity="0.43"/><rect x="1.50" y="95.5" width="6.00" height="1" fill="#9cdcfe" opacity="0.36"/><rect x="8.25" y="95.5" width="1.50" height="1" fill="#d4d4d4" opacity="0.3"/><rect x="10.50" y="95.5" width="2.25" height="1" fill="#ce9178" opacity="0.29"/><rect x="13.50" y="95.5" width="4.50" height="1" fill="#ce9178" opacity="0.28"/><rect x="3.00" y="97.0" width="6.00" height="1" fill="#9cdcfe" opacity="0.47"/><rect x="9.75" y="97.0" width="1.50" height="1" fill="#d4d4d4" opacity="0.3"/><rect x="12.00" y="97.0" width="2.25" height="1" fill="#ce9178" opacity="0.36"/><rect x="15.00" y="97.0" width="2.25" height="1" fill="#ce9178" opacity="0.31"/><rect x="18.00" y="97.0" width="1.50" height="1" fill="#ce9178" opacity="0.4"/><rect x="3.00" y="98.5" width="3.00" height="1" fill="#9cdcfe" opacity="0.4"/><rect x="6.75" y="98.5" width="1.50" height="1" fill="#d4d4d4" opacity="0.3"/><rect x="9.00" y="98.5" width="2.25" height="1" fill="#ce9178" opacity="0.43"/><rect x="3.00" y="100.0" width="6.00" height="1" fill="#9cdcfe" opacity="0.49"/><rect x="9.75" y="100.0" width="1.50" height="1" fill="#d4d4d4" opacity="0.3"/><rect x="12.00" y="100.0" width="2.25" height="1" fill="#ce9178" opacity="0.38"/><rect x="15.00" y="100.0" width="3.00" height="1" fill="#ce9178" opacity="0.42"/><rect x="18.75" y="100.0" width="2.25" height="1" fill="#ce9178" opacity="0.27"/><rect x="21.75" y="100.0" width="4.25" height="1" fill="#ce9178" opacity="0.31"/><rect x="4.50" y="101.5" width="9.00" height="1" fill="#9cdcfe" opacity="0.35"/><rect x="14.25" y="101.5" width="1.50" height="1" fill="#d4d4d4" opacity="0.3"/><rect x="16.50" y="101.5" width="2.25" height="1" fill="#ce9178" opacity="0.29"/><rect x="19.50" y="101.5" width="1.50" height="1" fill="#ce9178" opacity="0.36"/><rect x="3.00" y="103.0" width="7.50" height="1" fill="#9cdcfe" opacity="0.38"/><rect x="11.25" y="103.0" width="1.50" height="1" fill="#d4d4d4" opacity="0.3"/><rect x="13.50" y="103.0" width="3.00" height="1" fill="#ce9178" opacity="0.39"/><rect x="17.25" y="103.0" width="2.25" height="1" fill="#ce9178" opacity="0.34"/><rect x="20.25" y="103.0" width="3.00" height="1" fill="#ce9178" opacity="0.26"/><rect x="24.00" y="103.0" width="2.50" height="1" fill="#ce9178" opacity="0.34"/><rect x="3.00" y="104.5" width="4.50" height="1" fill="#9cdcfe" opacity="0.43"/><rect x="8.25" y="104.5" width="1.50" height="1" fill="#d4d4d4" opacity="0.3"/><rect x="10.50" y="104.5" width="2.25" height="1" fill="#ce9178" opacity="0.37"/><rect x="3.00" y="106.0" width="3.00" height="1" fill="#9cdcfe" opacity="0.39"/><rect x="6.75" y="106.0" width="1.50" height="1" fill="#d4d4d4" opacity="0.3"/><rect x="9.00" y="106.0" width="4.50" height="1" fill="#ce9178" opacity="0.33"/><rect x="14.25" y="106.0" width="2.25" height="1" fill="#ce9178" opacity="0.26"/><rect x="1.50" y="107.5" width="7.50" height="1" fill="#9cdcfe" opacity="0.37"/><rect x="9.75" y="107.5" width="1.50" height="1" fill="#d4d4d4" opacity="0.3"/><rect x="12.00" y="107.5" width="2.25" height="1" fill="#ce9178" opacity="0.26"/><rect x="4.50" y="109.0" width="3.00" height="1" fill="#9cdcfe" opacity="0.49"/><rect x="8.25" y="109.0" width="1.50" height="1" fill="#d4d4d4" opacity="0.3"/><rect x="10.50" y="109.0" width="2.25" height="1" fill="#ce9178" opacity="0.3"/><rect x="3.00" y="110.5" width="6.00" height="1" fill="#9cdcfe" opacity="0.38"/><rect x="9.75" y="110.5" width="1.50" height="1" fill="#d4d4d4" opacity="0.3"/><rect x="12.00" y="110.5" width="2.25" height="1" fill="#ce9178" opacity="0.3"/><rect x="4.50" y="112.0" width="6.00" height="1" fill="#9cdcfe" opacity="0.36"/><rect x="11.25" y="112.0" width="1.50" height="1" fill="#d4d4d4" opacity="0.3"/><rect x="13.50" y="112.0" width="2.25" height="1" fill="#ce9178" opacity="0.44"/><rect x="3.00" y="113.5" width="4.50" height="1" fill="#9cdcfe" opacity="0.44"/><rect x="8.25" y="113.5" width="1.50" height="1" fill="#d4d4d4" opacity="0.3"/><rect x="10.50" y="113.5" width="3.00" height="1" fill="#ce9178" opacity="0.29"/><rect x="14.25" y="113.5" width="2.25" height="1" fill="#ce9178" opacity="0.27"/><rect x="17.25" y="113.5" width="3.00" height="1" fill="#ce9178" opacity="0.41"/><rect x="21.00" y="113.5" width="2.25" height="1" fill="#ce9178" opacity="0.36"/><rect x="24.00" y="113.5" width="0.50" height="1" fill="#ce9178" opacity="0.37"/><rect x="3.00" y="115.0" width="7.50" height="1" fill="#9cdcfe" opacity="0.3"/><rect x="11.25" y="115.0" width="1.50" height="1" fill="#d4d4d4" opacity="0.3"/><rect x="13.50" y="115.0" width="3.00" height="1" fill="#ce9178" opacity="0.35"/><rect x="17.25" y="115.0" width="4.50" height="1" fill="#ce9178" opacity="0.4"/><rect x="22.50" y="115.0" width="1.00" height="1" fill="#ce9178" opacity="0.38"/><rect x="3.00" y="116.5" width="6.00" height="1" fill="#9cdcfe" opacity="0.44"/><rect x="9.75" y="116.5" width="1.50" height="1" fill="#d4d4d4" opacity="0.3"/><rect x="12.00" y="116.5" width="4.50" height="1" fill="#ce9178" opacity="0.27"/><rect x="3.00" y="118.0" width="6.00" height="1" fill="#9cdcfe" opacity="0.32"/><rect x="9.75" y="118.0" width="1.50" height="1" fill="#d4d4d4" opacity="0.3"/><rect x="12.00" y="118.0" width="3.00" height="1" fill="#ce9178" opacity="0.31"/><rect x="15.75" y="118.0" width="2.25" height="1" fill="#ce9178" opacity="0.36"/><rect x="4.50" y="119.5" width="4.50" height="1" fill="#9cdcfe" opacity="0.44"/><rect x="9.75" y="119.5" width="1.50" height="1" fill="#d4d4d4" opacity="0.3"/><rect x="12.00" y="119.5" width="4.50" height="1" fill="#ce9178" opacity="0.38"/><rect x="17.25" y="119.5" width="2.25" height="1" fill="#ce9178" opacity="0.26"/><rect x="3.00" y="121.0" width="3.00" height="1" fill="#9cdcfe" opacity="0.44"/><rect x="6.75" y="121.0" width="1.50" height="1" fill="#d4d4d4" opacity="0.3"/><rect x="9.00" y="121.0" width="3.00" height="1" fill="#ce9178" opacity="0.43"/><rect x="12.75" y="121.0" width="2.25" height="1" fill="#ce9178" opacity="0.33"/><rect x="3.00" y="122.5" width="6.00" height="1" fill="#9cdcfe" opacity="0.45"/><rect x="9.75" y="122.5" width="1.50" height="1" fill="#d4d4d4" opacity="0.3"/><rect x="12.00" y="122.5" width="2.25" height="1" fill="#ce9178" opacity="0.43"/><rect x="15.00" y="122.5" width="4.50" height="1" fill="#ce9178" opacity="0.44"/><rect x="20.25" y="122.5" width="1.75" height="1" fill="#ce9178" opacity="0.36"/><rect x="4.50" y="124.0" width="4.50" height="1" fill="#9cdcfe" opacity="0.46"/><rect x="9.75" y="124.0" width="1.50" height="1" fill="#d4d4d4" opacity="0.3"/><rect x="12.00" y="124.0" width="2.25" height="1" fill="#ce9178" opacity="0.4"/><rect x="15.00" y="124.0" width="4.50" height="1" fill="#ce9178" opacity="0.34"/><rect x="20.25" y="124.0" width="2.25" height="1" fill="#ce9178" opacity="0.41"/><rect x="23.25" y="124.0" width="2.75" height="1" fill="#ce9178" opacity="0.36"/><rect x="3.00" y="125.5" width="3.00" height="1" fill="#9cdcfe" opacity="0.36"/><rect x="6.75" y="125.5" width="1.50" height="1" fill="#d4d4d4" opacity="0.3"/><rect x="9.00" y="125.5" width="3.00" height="1" fill="#ce9178" opacity="0.35"/><rect x="12.75" y="125.5" width="0.75" height="1" fill="#ce9178" opacity="0.31"/><rect x="3.00" y="127.0" width="7.50" height="1" fill="#9cdcfe" opacity="0.45"/><rect x="11.25" y="127.0" width="1.50" height="1" fill="#d4d4d4" opacity="0.3"/><rect x="13.50" y="127.0" width="2.25" height="1" fill="#ce9178" opacity="0.26"/><rect x="16.50" y="127.0" width="2.25" height="1" fill="#ce9178" opacity="0.44"/><rect x="19.50" y="127.0" width="3.00" height="1" fill="#ce9178" opacity="0.34"/><rect x="23.25" y="127.0" width="0.25" height="1" fill="#ce9178" opacity="0.44"/><rect x="1.50" y="128.5" width="3.00" height="1" fill="#9cdcfe" opacity="0.35"/><rect x="5.25" y="128.5" width="1.50" height="1" fill="#d4d4d4" opacity="0.3"/><rect x="7.50" y="128.5" width="2.25" height="1" fill="#ce9178" opacity="0.32"/><rect x="10.50" y="128.5" width="3.00" height="1" fill="#ce9178" opacity="0.32"/><rect x="14.25" y="128.5" width="0.75" height="1" fill="#ce9178" opacity="0.37"/><rect x="3.00" y="130.0" width="9.00" height="1" fill="#9cdcfe" opacity="0.5"/><rect x="12.75" y="130.0" width="1.50" height="1" fill="#d4d4d4" opacity="0.3"/><rect x="15.00" y="130.0" width="4.50" height="1" fill="#ce9178" opacity="0.37"/><rect x="20.25" y="130.0" width="0.75" height="1" fill="#ce9178" opacity="0.39"/><rect x="4.50" y="131.5" width="6.00" height="1" fill="#9cdcfe" opacity="0.46"/><rect x="11.25" y="131.5" width="1.50" height="1" fill="#d4d4d4" opacity="0.3"/><rect x="13.50" y="131.5" width="2.25" height="1" fill="#ce9178" opacity="0.31"/><rect x="3.00" y="133.0" width="6.00" height="1" fill="#9cdcfe" opacity="0.42"/><rect x="9.75" y="133.0" width="1.50" height="1" fill="#d4d4d4" opacity="0.3"/><rect x="12.00" y="133.0" width="3.00" height="1" fill="#ce9178" opacity="0.26"/><rect x="15.75" y="133.0" width="0.75" height="1" fill="#ce9178" opacity="0.44"/><rect x="1.50" y="134.5" width="6.00" height="1" fill="#9cdcfe" opacity="0.49"/><rect x="8.25" y="134.5" width="1.50" height="1" fill="#d4d4d4" opacity="0.3"/><rect x="10.50" y="134.5" width="2.25" height="1" fill="#ce9178" opacity="0.27"/><rect x="13.50" y="134.5" width="3.00" height="1" fill="#ce9178" opacity="0.39"/><rect x="17.25" y="134.5" width="2.25" height="1" fill="#ce9178" opacity="0.45"/><rect x="20.25" y="134.5" width="0.25" height="1" fill="#ce9178" opacity="0.43"/><rect x="3.00" y="136.0" width="6.00" height="1" fill="#9cdcfe" opacity="0.44"/><rect x="9.75" y="136.0" width="1.50" height="1" fill="#d4d4d4" opacity="0.3"/><rect x="12.00" y="136.0" width="3.00" height="1" fill="#ce9178" opacity="0.34"/><rect x="15.75" y="136.0" width="2.25" height="1" fill="#ce9178" opacity="0.31"/><rect x="3.00" y="137.5" width="6.00" height="1" fill="#9cdcfe" opacity="0.41"/><rect x="9.75" y="137.5" width="1.50" height="1" fill="#d4d4d4" opacity="0.3"/><rect x="12.00" y="137.5" width="2.25" height="1" fill="#ce9178" opacity="0.32"/><rect x="15.00" y="137.5" width="2.25" height="1" fill="#ce9178" opacity="0.41"/><rect x="3.00" y="139.0" width="7.50" height="1" fill="#9cdcfe" opacity="0.4"/><rect x="11.25" y="139.0" width="1.50" height="1" fill="#d4d4d4" opacity="0.3"/><rect x="13.50" y="139.0" width="2.25" height="1" fill="#ce9178" opacity="0.28"/><rect x="16.50" y="139.0" width="2.25" height="1" fill="#ce9178" opacity="0.35"/><rect x="3.00" y="140.5" width="3.00" height="1" fill="#9cdcfe" opacity="0.33"/><rect x="6.75" y="140.5" width="1.50" height="1" fill="#d4d4d4" opacity="0.3"/><rect x="9.00" y="140.5" width="2.25" height="1" fill="#ce9178" opacity="0.31"/><rect x="3.00" y="142.0" width="6.00" height="1" fill="#9cdcfe" opacity="0.4"/><rect x="9.75" y="142.0" width="1.50" height="1" fill="#d4d4d4" opacity="0.3"/><rect x="12.00" y="142.0" width="4.50" height="1" fill="#ce9178" opacity="0.37"/><rect x="17.25" y="142.0" width="2.25" height="1" fill="#ce9178" opacity="0.33"/><rect x="3.00" y="143.5" width="3.00" height="1" fill="#9cdcfe" opacity="0.4"/><rect x="6.75" y="143.5" width="1.50" height="1" fill="#d4d4d4" opacity="0.3"/><rect x="9.00" y="143.5" width="4.50" height="1" fill="#ce9178" opacity="0.29"/><rect x="14.25" y="143.5" width="3.00" height="1" fill="#ce9178" opacity="0.25"/><rect x="18.00" y="143.5" width="1.00" height="1" fill="#ce9178" opacity="0.26"/><rect x="3.00" y="145.0" width="7.50" height="1" fill="#9cdcfe" opacity="0.38"/><rect x="11.25" y="145.0" width="1.50" height="1" fill="#d4d4d4" opacity="0.3"/><rect x="13.50" y="145.0" width="4.50" height="1" fill="#ce9178" opacity="0.39"/><rect x="18.75" y="145.0" width="2.25" height="1" fill="#ce9178" opacity="0.34"/><rect x="1.50" y="146.5" width="9.00" height="1" fill="#9cdcfe" opacity="0.41"/><rect x="11.25" y="146.5" width="1.50" height="1" fill="#d4d4d4" opacity="0.3"/><rect x="13.50" y="146.5" width="2.25" height="1" fill="#ce9178" opacity="0.28"/><rect x="4.50" y="148.0" width="6.00" height="1" fill="#9cdcfe" opacity="0.49"/><rect x="11.25" y="148.0" width="1.50" height="1" fill="#d4d4d4" opacity="0.3"/><rect x="13.50" y="148.0" width="2.25" height="1" fill="#ce9178" opacity="0.4"/><rect x="3.00" y="149.5" width="6.00" height="1" fill="#9cdcfe" opacity="0.36"/><rect x="9.75" y="149.5" width="1.50" height="1" fill="#d4d4d4" opacity="0.3"/><rect x="12.00" y="149.5" width="2.25" height="1" fill="#ce9178" opacity="0.4"/><rect x="1.50" y="151.0" width="7.50" height="1" fill="#9cdcfe" opacity="0.47"/><rect x="9.75" y="151.0" width="1.50" height="1" fill="#d4d4d4" opacity="0.3"/><rect x="12.00" y="151.0" width="3.00" height="1" fill="#ce9178" opacity="0.31"/><rect x="15.75" y="151.0" width="2.25" height="1" fill="#ce9178" opacity="0.3"/><rect x="18.75" y="151.0" width="4.50" height="1" fill="#ce9178" opacity="0.3"/><rect x="24.00" y="151.0" width="2.00" height="1" fill="#ce9178" opacity="0.4"/><rect x="0.00" y="152.5" width="1.50" height="1" fill="#d4d4d4" opacity="0.5"/></svg><div style="position:absolute;left:930.5px;top:87px;width:1px;height:289px;background:#2a2a2a;"></div><div style="position:absolute;left:903.3px;top:87px;width:1px;height:289px;background:#181818;"></div>
<div class="t" id="t0" style="left:44px;top:25.0px;line-height:20px;font-size:15px;color:#1a1a1a;font-weight:normal;font-family:'Liberation Sans',sans-serif;letter-spacing:0.3737px;">Activity Bar</div><div class="t" id="t1" style="left:608.5px;top:16.0px;line-height:20px;font-size:15px;color:#1a1a1a;font-weight:normal;font-family:'Liberation Sans',sans-serif;letter-spacing:0.3810px;">Editor Groups</div><div class="t" id="t2" style="left:106.4px;top:605.0px;line-height:20px;font-size:15px;color:#1a1a1a;font-weight:normal;font-family:'Liberation Sans',sans-serif;letter-spacing:0.3691px;">Side Bar</div><div class="t" id="t3" style="left:507.2px;top:591.0px;line-height:20px;font-size:14.5px;color:#1a1a1a;font-weight:normal;font-family:'Liberation Sans',sans-serif;letter-spacing:0.6497px;">Status Bar</div><div class="t" id="t4" style="left:52.3px;top:64.9px;line-height:20px;font-size:9.8px;color:#bbbbbb;font-weight:normal;font-family:'Liberation Sans',sans-serif;transform:scaleX(0.6934);transform-origin:0 0;">EXPLORER</div><div class="t" id="t5" style="left:52.3px;top:85.6px;line-height:20px;font-size:9.3px;color:#cccccc;font-weight:bold;font-family:'Liberation Sans',sans-serif;transform:scaleX(0.8346);transform-origin:0 0;">OPEN EDITORS</div><div class="t" id="t6" style="left:52.3px;top:217.6px;line-height:20px;font-size:9.3px;color:#cccccc;font-weight:bold;font-family:'Liberation Sans',sans-serif;transform:scaleX(0.8154);transform-origin:0 0;">VS CODE PROJECTS (WORKSPACE)</div><div class="t" id="t7" style="left:53.6px;top:101.8px;line-height:20px;font-size:9px;color:#e8e8e8;font-weight:bold;font-family:'Liberation Sans',sans-serif;transform:scaleX(0.7822);transform-origin:0 0;">LEFT</div><div class="t" id="t8" style="left:53.6px;top:168.3px;line-height:20px;font-size:9px;color:#e8e8e8;font-weight:bold;font-family:'Liberation Sans',sans-serif;transform:scaleX(0.9071);transform-origin:0 0;">RIGHT</div><div class="t" id="t9" style="left:64.7px;top:117.49999999999999px;line-height:20px;font-size:8.6px;color:#519aba;font-weight:bold;font-family:'Liberation Sans',sans-serif;transform:scaleX(0.8558);transform-origin:0 0;">TS</div><div class="t" id="t10" style="left:78.8px;top:118.69999999999999px;line-height:20px;font-size:9.8px;color:#d9d9d9;font-weight:normal;font-family:'Liberation Sans',sans-serif;letter-spacing:0.0393px;">findModel.ts</div><div class="t" id="t11" style="left:136.7px;top:118.69999999999999px;line-height:20px;font-size:9.3px;color:#8f8f8f;font-weight:normal;font-family:'Liberation Sans',sans-serif;letter-spacing:-0.2739px;">vscode/src/vs/...</div><div class="t" id="t12" style="left:64.7px;top:134.0px;line-height:20px;font-size:8.6px;color:#519aba;font-weight:bold;font-family:'Liberation Sans',sans-serif;transform:scaleX(0.8558);transform-origin:0 0;">TS</div><div class="t" id="t13" style="left:78.8px;top:135.2px;line-height:20px;font-size:9.8px;color:#d9d9d9;font-weight:normal;font-family:'Liberation Sans',sans-serif;letter-spacing:0.0647px;">findOptionsWidget.ts</div><div class="t" id="t14" style="left:175.1px;top:135.2px;line-height:20px;font-size:9.3px;color:#8f8f8f;font-weight:normal;font-family:'Liberation Sans',sans-serif;letter-spacing:-0.2679px;">vsco...</div><div class="t" id="t15" style="left:78.8px;top:151.7px;line-height:20px;font-size:9.8px;color:#d9d9d9;font-weight:normal;font-family:'Liberation Sans',sans-serif;"><span class="cb" style="display:inline-block;font-size:1.12em;transform:scaleX(0.8032);transform-origin:0 0;margin-right:-16.428px">CONTRIBUTING</span>.md</div><div class="t" id="t16" style="left:166.79999999999998px;top:151.7px;line-height:20px;font-size:9.3px;color:#8f8f8f;font-weight:normal;font-family:'Liberation Sans',sans-serif;letter-spacing:-0.4115px;">vscode</div><div class="t" id="t17" style="left:64.7px;top:183.5px;line-height:20px;font-size:8.6px;color:#519aba;font-weight:bold;font-family:'Liberation Sans',sans-serif;transform:scaleX(0.8558);transform-origin:0 0;">TS</div><div class="t" id="t18" style="left:78.8px;top:184.7px;line-height:20px;font-size:9.8px;color:#d9d9d9;font-weight:normal;font-family:'Liberation Sans',sans-serif;letter-spacing:-0.0741px;">contextmenu.ts</div><div class="t" id="t19" style="left:148.79999999999998px;top:184.7px;line-height:20px;font-size:9.3px;color:#8f8f8f;font-weight:normal;font-family:'Liberation Sans',sans-serif;letter-spacing:-0.2690px;">vscode/src/...</div><div class="t" id="t20" style="left:64.5px;top:200.29999999999998px;line-height:20px;font-size:9.6px;color:#cbcb41;font-weight:bold;font-family:'Liberation Sans',sans-serif;transform:scaleX(0.8086);transform-origin:0 0;">{ }</div><div class="t" id="t21" style="left:78.8px;top:201.2px;line-height:20px;font-size:9.8px;color:#d9d9d9;font-weight:normal;font-family:'Liberation Sans',sans-serif;letter-spacing:-0.2029px;">package.json</div><div class="t" id="t22" style="left:138.7px;top:201.2px;line-height:20px;font-size:9.3px;color:#8f8f8f;font-weight:normal;font-family:'Liberation Sans',sans-serif;letter-spacing:-0.3615px;">vscode</div><div class="t" id="t23" style="left:71.4px;top:236.7px;line-height:20px;font-size:9.8px;color:#d9d9d9;font-weight:normal;font-family:'Liberation Sans',sans-serif;letter-spacing:0.1526px;">.mention-bot</div><div class="t" id="t24" style="left:59.7px;top:252.89999999999998px;line-height:20px;font-size:10.5px;color:#a074c4;font-weight:bold;font-family:'Liberation Sans',sans-serif;font-style:italic;">!</div><div class="t" id="t25" style="left:71.4px;top:253.2px;line-height:20px;font-size:9.8px;color:#d9d9d9;font-weight:normal;font-family:'Liberation Sans',sans-serif;letter-spacing:-0.1267px;">.travis.yml</div><div class="t" id="t26" style="left:71.4px;top:269.7px;line-height:20px;font-size:9.8px;color:#d9d9d9;font-weight:normal;font-family:'Liberation Sans',sans-serif;letter-spacing:-0.2362px;">.yarnrc</div><div class="t" id="t27" style="left:59.7px;top:285.9px;line-height:20px;font-size:10.5px;color:#a074c4;font-weight:bold;font-family:'Liberation Sans',sans-serif;font-style:italic;">!</div><div class="t" id="t28" style="left:71.4px;top:286.2px;line-height:20px;font-size:9.8px;color:#d9d9d9;font-weight:normal;font-family:'Liberation Sans',sans-serif;letter-spacing:-0.0362px;">appveyor.yml</div><div class="t" id="t29" style="left:71.4px;top:302.7px;line-height:20px;font-size:9.8px;color:#d9d9d9;font-weight:normal;font-family:'Liberation Sans',sans-serif;"><span class="cb" style="display:inline-block;font-size:1.12em;transform:scaleX(0.7849);transform-origin:0 0;margin-right:-24.513px">CODE_OF_CONDUCT</span>.md</div><div class="t" id="t30" style="left:71.4px;top:319.2px;line-height:20px;font-size:9.8px;color:#d9d9d9;font-weight:normal;font-family:'Liberation Sans',sans-serif;"><span class="cb" style="display:inline-block;font-size:1.12em;transform:scaleX(0.8056);transform-origin:0 0;margin-right:-16.228px">CONTRIBUTING</span>.md</div><div class="t" id="t31" style="left:58.2px;top:334.5px;line-height:20px;font-size:8.6px;color:#519aba;font-weight:bold;font-family:'Liberation Sans',sans-serif;transform:scaleX(0.8178);transform-origin:0 0;">JS</div><div class="t" id="t32" style="left:71.4px;top:335.7px;line-height:20px;font-size:9.8px;color:#d9d9d9;font-weight:normal;font-family:'Liberation Sans',sans-serif;letter-spacing:0.0142px;">gulpfile.js</div><div class="t" id="t33" style="left:71.4px;top:352.2px;line-height:20px;font-size:9.8px;color:#d9d9d9;font-weight:normal;font-family:'Liberation Sans',sans-serif;"><span class="cb" style="display:inline-block;font-size:1.12em;transform:scaleX(0.7523);transform-origin:0 0;margin-right:-11.631px">LICENSE</span>.txt</div><div class="t" id="t34" style="left:71.4px;top:368.7px;line-height:20px;font-size:9.8px;color:#d9d9d9;font-weight:normal;font-family:'Liberation Sans',sans-serif;letter-spacing:0.0877px;">npm-debug.log</div><div class="t" id="t35" style="left:58.0px;top:384.3px;line-height:20px;font-size:9.6px;color:#cbcb41;font-weight:bold;font-family:'Liberation Sans',sans-serif;transform:scaleX(0.8086);transform-origin:0 0;">{ }</div><div class="t" id="t36" style="left:71.4px;top:385.2px;line-height:20px;font-size:9.8px;color:#d9d9d9;font-weight:normal;font-family:'Liberation Sans',sans-serif;"><span class="cb" style="display:inline-block;font-size:1.12em;transform:scaleX(0.7761);transform-origin:0 0;margin-right:-15.697px">OSSREADME</span>.json</div><div class="t" id="t37" style="left:58.0px;top:400.8px;line-height:20px;font-size:9.6px;color:#cbcb41;font-weight:bold;font-family:'Liberation Sans',sans-serif;transform:scaleX(0.8086);transform-origin:0 0;">{ }</div><div class="t" id="t38" style="left:71.4px;top:401.7px;line-height:20px;font-size:9.8px;color:#d9d9d9;font-weight:normal;font-family:'Liberation Sans',sans-serif;letter-spacing:-0.2029px;">package.json</div><div class="t" id="t39" style="left:58.0px;top:417.3px;line-height:20px;font-size:9.6px;color:#cbcb41;font-weight:bold;font-family:'Liberation Sans',sans-serif;transform:scaleX(0.8086);transform-origin:0 0;">{ }</div><div class="t" id="t40" style="left:71.4px;top:418.2px;line-height:20px;font-size:9.8px;color:#d9d9d9;font-weight:normal;font-family:'Liberation Sans',sans-serif;letter-spacing:0.0521px;">product.json</div><div class="t" id="t41" style="left:71.4px;top:434.7px;line-height:20px;font-size:9.8px;color:#d9d9d9;font-weight:normal;font-family:'Liberation Sans',sans-serif;"><span class="cb" style="display:inline-block;font-size:1.12em;transform:scaleX(0.8023);transform-origin:0 0;margin-right:-9.281px">README</span>.md</div><div class="t" id="t42" style="left:71.4px;top:451.2px;line-height:20px;font-size:9.8px;color:#d9d9d9;font-weight:normal;font-family:'Liberation Sans',sans-serif;letter-spacing:-0.0772px;">ThirdPartyNotices.txt</div><div class="t" id="t43" style="left:58.0px;top:466.8px;line-height:20px;font-size:9.6px;color:#cbcb41;font-weight:bold;font-family:'Liberation Sans',sans-serif;transform:scaleX(0.8086);transform-origin:0 0;">{ }</div><div class="t" id="t44" style="left:71.4px;top:467.7px;line-height:20px;font-size:9.8px;color:#d9d9d9;font-weight:normal;font-family:'Liberation Sans',sans-serif;letter-spacing:-0.0122px;">tsfmt.json</div><div class="t" id="t45" style="left:58.0px;top:483.3px;line-height:20px;font-size:9.6px;color:#cbcb41;font-weight:bold;font-family:'Liberation Sans',sans-serif;transform:scaleX(0.8086);transform-origin:0 0;">{ }</div><div class="t" id="t46" style="left:71.4px;top:484.2px;line-height:20px;font-size:9.8px;color:#d9d9d9;font-weight:normal;font-family:'Liberation Sans',sans-serif;letter-spacing:-0.0131px;">tslint.json</div><div class="t" id="t47" style="left:71.4px;top:500.7px;line-height:20px;font-size:9.8px;color:#d9d9d9;font-weight:normal;font-family:'Liberation Sans',sans-serif;letter-spacing:-0.0448px;">yarn.lock</div><div class="t" id="t48" style="left:61.9px;top:517.2px;line-height:20px;font-size:9.8px;color:#d9d9d9;font-weight:normal;font-family:'Liberation Sans',sans-serif;letter-spacing:-0.0545px;">vscode-docs</div><div class="t" id="t49" style="left:71.4px;top:533.7px;line-height:20px;font-size:9.8px;color:#d9d9d9;font-weight:normal;font-family:'Liberation Sans',sans-serif;letter-spacing:-0.2665px;">.vscode</div><div class="t" id="t50" style="left:71.4px;top:550.2px;line-height:20px;font-size:9.8px;color:#d9d9d9;font-weight:normal;font-family:'Liberation Sans',sans-serif;letter-spacing:0.0356px;">blogs</div><div class="t" id="t51" style="left:211.4px;top:63.3px;line-height:20px;font-size:8.6px;color:#519aba;font-weight:bold;font-family:'Liberation Sans',sans-serif;transform:scaleX(0.8558);transform-origin:0 0;">TS</div><div class="t" id="t52" style="left:225.5px;top:64.5px;line-height:20px;font-size:9.8px;color:#808080;font-weight:normal;font-family:'Liberation Sans',sans-serif;letter-spacing:0.0643px;">findModel.ts</div><div class="t" id="t53" style="left:311.6px;top:63.3px;line-height:20px;font-size:8.6px;color:#519aba;font-weight:bold;font-family:'Liberation Sans',sans-serif;transform:scaleX(0.8558);transform-origin:0 0;">TS</div><div class="t" id="t54" style="left:326.4px;top:64.5px;line-height:20px;font-size:9.8px;color:#b8b8b8;font-weight:normal;font-family:'Liberation Sans',sans-serif;letter-spacing:0.0297px;">findOptionsWidget.ts</div><div class="t" id="t55" style="left:464px;top:64.5px;line-height:20px;font-size:9.8px;color:#808080;font-weight:normal;font-family:'Liberation Sans',sans-serif;"><span class="cb" style="display:inline-block;font-size:1.12em;transform:scaleX(0.8152);transform-origin:0 0;margin-right:-15.428px">CONTRIBUTING</span>.md</div><div class="t" id="t56" style="left:610.5px;top:63.3px;line-height:20px;font-size:8.6px;color:#519aba;font-weight:bold;font-family:'Liberation Sans',sans-serif;transform:scaleX(0.8558);transform-origin:0 0;">TS</div><div class="t" id="t57" style="left:624.3px;top:64.5px;line-height:20px;font-size:9.8px;color:#808080;font-weight:normal;font-family:'Liberation Sans',sans-serif;letter-spacing:-0.0527px;">contextmenu.ts</div><div class="t" id="t58" style="left:723.5999999999999px;top:63.599999999999994px;line-height:20px;font-size:9.6px;color:#cbcb41;font-weight:bold;font-family:'Liberation Sans',sans-serif;transform:scaleX(0.8086);transform-origin:0 0;">{ }</div><div class="t" id="t59" style="left:736.8px;top:64.5px;line-height:20px;font-size:9.8px;color:#e8e8e8;font-weight:normal;font-family:'Liberation Sans',sans-serif;letter-spacing:-0.1695px;-webkit-text-stroke:0.35px #e8e8e8;">package.json</div><div class="t" id="t60" style="left:215.6px;top:380.8px;line-height:20px;font-size:9.6px;color:#8b8b8b;font-weight:normal;font-family:'Liberation Sans',sans-serif;transform:scaleX(0.7557);transform-origin:0 0;">PROBLEMS</div><div class="t" id="t61" style="left:279.6px;top:380.8px;line-height:20px;font-size:9.6px;color:#8b8b8b;font-weight:normal;font-family:'Liberation Sans',sans-serif;transform:scaleX(0.7908);transform-origin:0 0;">OUTPUT</div><div class="t" id="t62" style="left:335px;top:380.8px;line-height:20px;font-size:9.6px;color:#8b8b8b;font-weight:normal;font-family:'Liberation Sans',sans-serif;transform:scaleX(0.7682);transform-origin:0 0;">DEBUG CONSOLE</div><div class="t" id="t63" style="left:423px;top:380.8px;line-height:20px;font-size:9.6px;color:#e7e7e7;font-weight:normal;font-family:'Liberation Sans',sans-serif;transform:scaleX(0.7936);transform-origin:0 0;">TERMINAL</div><div class="t" id="t64" style="left:736px;top:380.6px;line-height:20px;font-size:9.6px;color:#e0e0e0;font-weight:normal;font-family:'Liberation Sans',sans-serif;letter-spacing:0.0514px;">1: powershell</div><div class="t" id="t65" style="left:20.2px;top:569.4px;line-height:20px;font-size:10.4px;color:#ffffff;font-weight:normal;font-family:'Liberation Sans',sans-serif;transform:scaleX(0.8437);transform-origin:0 0;">master</div><div class="t" id="t66" style="left:69.2px;top:569.4px;line-height:20px;font-size:10.4px;color:#ffffff;font-weight:normal;font-family:'Liberation Sans',sans-serif;transform:scaleX(0.7837);transform-origin:0 0;">17↓ 0↑</div><div class="t" id="t67" style="left:114.6px;top:569.2px;line-height:20px;font-size:9.6px;color:#ffffff;font-weight:normal;font-family:'Liberation Sans',sans-serif;">0</div><div class="t" id="t68" style="left:134.8px;top:569.2px;line-height:20px;font-size:9.6px;color:#ffffff;font-weight:normal;font-family:'Liberation Sans',sans-serif;">0</div><div class="t" id="t69" style="left:729.3px;top:569.4px;line-height:20px;font-size:10.4px;color:#ffffff;font-weight:normal;font-family:'Liberation Sans',sans-serif;transform:scaleX(0.8097);transform-origin:0 0;">Ln 1, Col 1</div><div class="t" id="t70" style="left:781.4px;top:569.4px;line-height:20px;font-size:10.4px;color:#ffffff;font-weight:normal;font-family:'Liberation Sans',sans-serif;transform:scaleX(0.7832);transform-origin:0 0;">Spaces: 2</div><div class="t" id="t71" style="left:829.6px;top:569.4px;line-height:20px;font-size:10.4px;color:#ffffff;font-weight:normal;font-family:'Liberation Sans',sans-serif;transform:scaleX(0.7949);transform-origin:0 0;">UTF-8</div><div class="t" id="t72" style="left:864px;top:569.4px;line-height:20px;font-size:10.4px;color:#ffffff;font-weight:normal;font-family:'Liberation Sans',sans-serif;transform:scaleX(0.6919);transform-origin:0 0;">LF</div><div class="t" id="t73" style="left:884.8px;top:569.4px;line-height:20px;font-size:10.4px;color:#ffffff;font-weight:normal;font-family:'Liberation Sans',sans-serif;transform:scaleX(0.7648);transform-origin:0 0;">JSON</div><div class="t" id="t74" style="left:642.4px;top:445.0px;line-height:20px;font-size:14.5px;color:#ffffff;font-weight:normal;font-family:'Liberation Sans',sans-serif;letter-spacing:0.6013px;">Panel</div><div class="t" id="t75" style="left:859.4px;top:608.0px;line-height:20px;font-size:12px;color:#8c8c8c;font-weight:normal;font-family:'Liberation Sans',sans-serif;transform:scaleX(0.8146);transform-origin:0 0;">INSTALUJ.CZ</div>
</body></html>
